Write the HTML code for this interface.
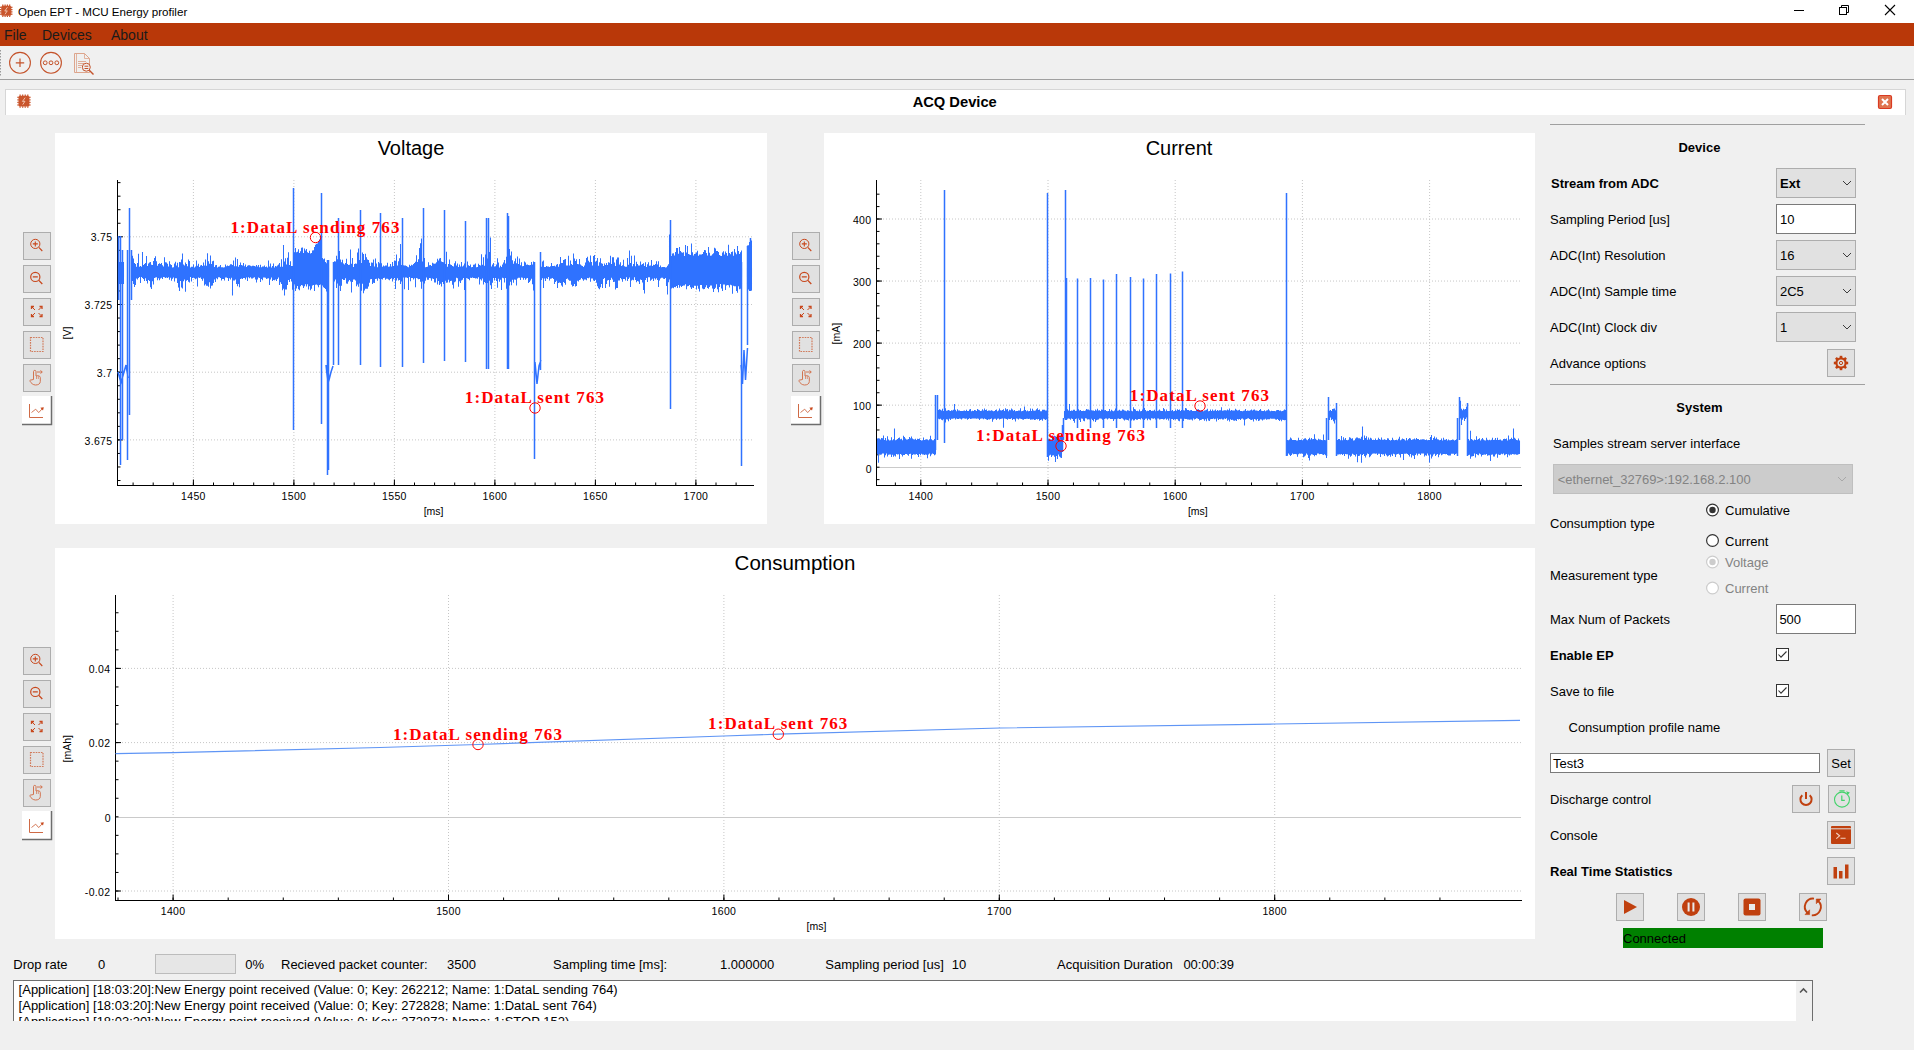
<!DOCTYPE html>
<html><head><meta charset="utf-8"><title>Open EPT - MCU Energy profiler</title>
<style>
html,body{margin:0;padding:0;background:#f0f0f0;width:1914px;height:1050px;overflow:hidden;}
svg{position:absolute;left:0;top:0;display:block;font-family:"Liberation Sans",sans-serif;}
</style></head><body>
<svg width="1914" height="1050" viewBox="0 0 1914 1050"><rect x="0" y="0" width="1914" height="23" fill="#ffffff"/><rect x="1.2" y="5.7" width="10.1" height="10.1" rx="1.5" fill="#c9552c"/><rect x="2.20" y="4.5" width="1.2" height="1.5" fill="#c9552c"/><rect x="2.20" y="15.5" width="1.2" height="1.5" fill="#c9552c"/><rect x="0" y="6.70" width="1.5" height="1.2" fill="#c9552c"/><rect x="11.0" y="6.70" width="1.5" height="1.2" fill="#c9552c"/><rect x="4.50" y="4.5" width="1.2" height="1.5" fill="#c9552c"/><rect x="4.50" y="15.5" width="1.2" height="1.5" fill="#c9552c"/><rect x="0" y="9.00" width="1.5" height="1.2" fill="#c9552c"/><rect x="11.0" y="9.00" width="1.5" height="1.2" fill="#c9552c"/><rect x="6.80" y="4.5" width="1.2" height="1.5" fill="#c9552c"/><rect x="6.80" y="15.5" width="1.2" height="1.5" fill="#c9552c"/><rect x="0" y="11.30" width="1.5" height="1.2" fill="#c9552c"/><rect x="11.0" y="11.30" width="1.5" height="1.2" fill="#c9552c"/><rect x="9.10" y="4.5" width="1.2" height="1.5" fill="#c9552c"/><rect x="9.10" y="15.5" width="1.2" height="1.5" fill="#c9552c"/><rect x="0" y="13.60" width="1.5" height="1.2" fill="#c9552c"/><rect x="11.0" y="13.60" width="1.5" height="1.2" fill="#c9552c"/><path d="M7.45 7.25 L4.75 11.05 L7.25 10.85 L5.05 14.25" stroke="#f3c9b5" stroke-width="0.9" fill="none"/><text x="18" y="16" font-size="11.6" fill="#000">Open EPT - MCU Energy profiler</text><line x1="1794" y1="10.5" x2="1804" y2="10.5" stroke="#000" stroke-width="1"/><rect x="1839.5" y="7.5" width="7" height="7" fill="none" stroke="#000" stroke-width="1"/><path d="M1841.5 7.5 V5.5 H1848.5 V12.5 H1846.5" fill="none" stroke="#000" stroke-width="1"/><path d="M1885 5 L1895 15 M1895 5 L1885 15" stroke="#000" stroke-width="1.1"/><rect x="0" y="23" width="1914" height="23" fill="#b93809"/><text x="4" y="40" font-size="14" fill="#1b1b1b">File</text><text x="42" y="40" font-size="14" fill="#1b1b1b">Devices</text><text x="111" y="40" font-size="14" fill="#1b1b1b">About</text><rect x="0" y="46" width="1914" height="33" fill="#f0f0f0"/><rect x="0" y="50" width="1" height="1.5" fill="#9a9a9a"/><rect x="0" y="53" width="1" height="1.5" fill="#9a9a9a"/><rect x="0" y="56" width="1" height="1.5" fill="#9a9a9a"/><rect x="0" y="59" width="1" height="1.5" fill="#9a9a9a"/><rect x="0" y="62" width="1" height="1.5" fill="#9a9a9a"/><rect x="0" y="65" width="1" height="1.5" fill="#9a9a9a"/><rect x="0" y="68" width="1" height="1.5" fill="#9a9a9a"/><rect x="0" y="71" width="1" height="1.5" fill="#9a9a9a"/><rect x="0" y="74" width="1" height="1.5" fill="#9a9a9a"/><circle cx="20" cy="62.8" r="10.4" fill="none" stroke="#c4522a" stroke-width="1.1"/><path d="M20 58.5 V67 M15.8 62.8 H24.2" stroke="#c4522a" stroke-width="1.2"/><circle cx="51" cy="62.8" r="10.4" fill="none" stroke="#c4522a" stroke-width="1.1"/><circle cx="45.2" cy="62.8" r="1.9" fill="none" stroke="#c4522a" stroke-width="1"/><circle cx="51" cy="62.8" r="1.9" fill="none" stroke="#c4522a" stroke-width="1"/><circle cx="56.8" cy="62.8" r="1.9" fill="none" stroke="#c4522a" stroke-width="1"/><path d="M74.5 53.5 H84.5 L89.5 58.5 V72.5 H74.5 Z" fill="none" stroke="#dda58c" stroke-width="1"/><path d="M76.5 54 V72 M84.5 53.5 V58.5 H89.5" fill="none" stroke="#dda58c" stroke-width="0.8"/><path d="M78 61.5 H86 M78 63.5 H84 M78 65.5 H82 M78 67.5 H81" stroke="#dda58c" stroke-width="0.9"/><circle cx="86.3" cy="67.2" r="4" fill="#f0f0f0" stroke="#c4522a" stroke-width="1"/><path d="M84.5 66.2 H88.3 M84.5 68.5 H88.3" stroke="#c4522a" stroke-width="1"/><path d="M89.3 70.3 L93.5 74.5" stroke="#c4522a" stroke-width="1.4"/><line x1="0" y1="79.5" x2="1914" y2="79.5" stroke="#a0a0a0" stroke-width="1"/><rect x="5" y="89" width="1901" height="26" fill="#ffffff"/><line x1="5" y1="89.5" x2="1906" y2="89.5" stroke="#d6d6d6" stroke-width="1"/><line x1="5.5" y1="89" x2="5.5" y2="115" stroke="#d6d6d6" stroke-width="1"/><line x1="1905.5" y1="89" x2="1905.5" y2="115" stroke="#d6d6d6" stroke-width="1"/><rect x="18.5" y="95.7" width="10.9" height="10.9" rx="1.5" fill="#c9552c"/><rect x="19.50" y="94.5" width="1.2" height="1.5" fill="#c9552c"/><rect x="19.50" y="106.3" width="1.2" height="1.5" fill="#c9552c"/><rect x="17.3" y="96.70" width="1.5" height="1.2" fill="#c9552c"/><rect x="29.1" y="96.70" width="1.5" height="1.2" fill="#c9552c"/><rect x="22.07" y="94.5" width="1.2" height="1.5" fill="#c9552c"/><rect x="22.07" y="106.3" width="1.2" height="1.5" fill="#c9552c"/><rect x="17.3" y="99.27" width="1.5" height="1.2" fill="#c9552c"/><rect x="29.1" y="99.27" width="1.5" height="1.2" fill="#c9552c"/><rect x="24.63" y="94.5" width="1.2" height="1.5" fill="#c9552c"/><rect x="24.63" y="106.3" width="1.2" height="1.5" fill="#c9552c"/><rect x="17.3" y="101.83" width="1.5" height="1.2" fill="#c9552c"/><rect x="29.1" y="101.83" width="1.5" height="1.2" fill="#c9552c"/><rect x="27.20" y="94.5" width="1.2" height="1.5" fill="#c9552c"/><rect x="27.20" y="106.3" width="1.2" height="1.5" fill="#c9552c"/><rect x="17.3" y="104.40" width="1.5" height="1.2" fill="#c9552c"/><rect x="29.1" y="104.40" width="1.5" height="1.2" fill="#c9552c"/><path d="M25.150000000000002 97.65 L22.450000000000003 101.45 L24.950000000000003 101.25 L22.750000000000004 104.65" stroke="#f3c9b5" stroke-width="0.9" fill="none"/><text x="954.7" y="107" font-size="14.7" font-weight="bold" text-anchor="middle" fill="#000">ACQ Device</text><rect x="1878.5" y="95.5" width="13" height="13" rx="1.5" fill="#e07550" stroke="#d93a22" stroke-width="1.2"/><path d="M1882 99 L1888 105 M1888 99 L1882 105" stroke="#fff" stroke-width="2"/><rect x="55" y="133" width="712" height="391" fill="#fff"/><text x="411" y="155" font-size="20" text-anchor="middle" fill="#000">Voltage</text><line x1="118" y1="236.8" x2="753" y2="236.8" stroke="#c6c6c6" stroke-width="1" stroke-dasharray="1 2"/><line x1="118" y1="304.5" x2="753" y2="304.5" stroke="#c6c6c6" stroke-width="1" stroke-dasharray="1 2"/><line x1="118" y1="372.2" x2="753" y2="372.2" stroke="#c6c6c6" stroke-width="1" stroke-dasharray="1 2"/><line x1="118" y1="439.9" x2="753" y2="439.9" stroke="#c6c6c6" stroke-width="1" stroke-dasharray="1 2"/><line x1="193.4" y1="180" x2="193.4" y2="485" stroke="#c6c6c6" stroke-width="1" stroke-dasharray="1 2"/><line x1="293.9" y1="180" x2="293.9" y2="485" stroke="#c6c6c6" stroke-width="1" stroke-dasharray="1 2"/><line x1="394.4" y1="180" x2="394.4" y2="485" stroke="#c6c6c6" stroke-width="1" stroke-dasharray="1 2"/><line x1="494.9" y1="180" x2="494.9" y2="485" stroke="#c6c6c6" stroke-width="1" stroke-dasharray="1 2"/><line x1="595.4" y1="180" x2="595.4" y2="485" stroke="#c6c6c6" stroke-width="1" stroke-dasharray="1 2"/><line x1="695.9" y1="180" x2="695.9" y2="485" stroke="#c6c6c6" stroke-width="1" stroke-dasharray="1 2"/><rect x="117" y="180" width="1" height="306" fill="#000"/><rect x="117" y="485" width="637" height="1" fill="#000"/><line x1="118" y1="480.52" x2="120.5" y2="480.52" stroke="#000" stroke-width="1"/><line x1="118" y1="466.98" x2="120.5" y2="466.98" stroke="#000" stroke-width="1"/><line x1="118" y1="453.44" x2="120.5" y2="453.44" stroke="#000" stroke-width="1"/><line x1="118" y1="439.9" x2="120.5" y2="439.9" stroke="#000" stroke-width="1"/><line x1="118" y1="426.36" x2="120.5" y2="426.36" stroke="#000" stroke-width="1"/><line x1="118" y1="412.82" x2="120.5" y2="412.82" stroke="#000" stroke-width="1"/><line x1="118" y1="399.28" x2="120.5" y2="399.28" stroke="#000" stroke-width="1"/><line x1="118" y1="385.74" x2="120.5" y2="385.74" stroke="#000" stroke-width="1"/><line x1="118" y1="372.2" x2="120.5" y2="372.2" stroke="#000" stroke-width="1"/><line x1="118" y1="358.66" x2="120.5" y2="358.66" stroke="#000" stroke-width="1"/><line x1="118" y1="345.12" x2="120.5" y2="345.12" stroke="#000" stroke-width="1"/><line x1="118" y1="331.58" x2="120.5" y2="331.58" stroke="#000" stroke-width="1"/><line x1="118" y1="318.04" x2="120.5" y2="318.04" stroke="#000" stroke-width="1"/><line x1="118" y1="304.5" x2="120.5" y2="304.5" stroke="#000" stroke-width="1"/><line x1="118" y1="290.96" x2="120.5" y2="290.96" stroke="#000" stroke-width="1"/><line x1="118" y1="277.42" x2="120.5" y2="277.42" stroke="#000" stroke-width="1"/><line x1="118" y1="263.88" x2="120.5" y2="263.88" stroke="#000" stroke-width="1"/><line x1="118" y1="250.34" x2="120.5" y2="250.34" stroke="#000" stroke-width="1"/><line x1="118" y1="236.8" x2="120.5" y2="236.8" stroke="#000" stroke-width="1"/><line x1="118" y1="223.26" x2="120.5" y2="223.26" stroke="#000" stroke-width="1"/><line x1="118" y1="209.72" x2="120.5" y2="209.72" stroke="#000" stroke-width="1"/><line x1="118" y1="196.18" x2="120.5" y2="196.18" stroke="#000" stroke-width="1"/><line x1="118" y1="182.64" x2="120.5" y2="182.64" stroke="#000" stroke-width="1"/><line x1="118" y1="236.8" x2="123" y2="236.8" stroke="#000" stroke-width="1"/><text x="112.5" y="241.4" font-size="10.5" text-anchor="end" fill="#000" letter-spacing="0.35">3.75</text><line x1="118" y1="304.5" x2="123" y2="304.5" stroke="#000" stroke-width="1"/><text x="112.5" y="309.1" font-size="10.5" text-anchor="end" fill="#000" letter-spacing="0.35">3.725</text><line x1="118" y1="372.2" x2="123" y2="372.2" stroke="#000" stroke-width="1"/><text x="112.5" y="376.8" font-size="10.5" text-anchor="end" fill="#000" letter-spacing="0.35">3.7</text><line x1="118" y1="439.9" x2="123" y2="439.9" stroke="#000" stroke-width="1"/><text x="112.5" y="444.5" font-size="10.5" text-anchor="end" fill="#000" letter-spacing="0.35">3.675</text><line x1="133.1" y1="485" x2="133.1" y2="482.5" stroke="#000" stroke-width="1"/><line x1="153.2" y1="485" x2="153.2" y2="482.5" stroke="#000" stroke-width="1"/><line x1="173.3" y1="485" x2="173.3" y2="482.5" stroke="#000" stroke-width="1"/><line x1="193.4" y1="485" x2="193.4" y2="482.5" stroke="#000" stroke-width="1"/><line x1="213.5" y1="485" x2="213.5" y2="482.5" stroke="#000" stroke-width="1"/><line x1="233.6" y1="485" x2="233.6" y2="482.5" stroke="#000" stroke-width="1"/><line x1="253.7" y1="485" x2="253.7" y2="482.5" stroke="#000" stroke-width="1"/><line x1="273.8" y1="485" x2="273.8" y2="482.5" stroke="#000" stroke-width="1"/><line x1="293.9" y1="485" x2="293.9" y2="482.5" stroke="#000" stroke-width="1"/><line x1="314.0" y1="485" x2="314.0" y2="482.5" stroke="#000" stroke-width="1"/><line x1="334.1" y1="485" x2="334.1" y2="482.5" stroke="#000" stroke-width="1"/><line x1="354.2" y1="485" x2="354.2" y2="482.5" stroke="#000" stroke-width="1"/><line x1="374.3" y1="485" x2="374.3" y2="482.5" stroke="#000" stroke-width="1"/><line x1="394.4" y1="485" x2="394.4" y2="482.5" stroke="#000" stroke-width="1"/><line x1="414.5" y1="485" x2="414.5" y2="482.5" stroke="#000" stroke-width="1"/><line x1="434.6" y1="485" x2="434.6" y2="482.5" stroke="#000" stroke-width="1"/><line x1="454.7" y1="485" x2="454.7" y2="482.5" stroke="#000" stroke-width="1"/><line x1="474.8" y1="485" x2="474.8" y2="482.5" stroke="#000" stroke-width="1"/><line x1="494.9" y1="485" x2="494.9" y2="482.5" stroke="#000" stroke-width="1"/><line x1="515.0" y1="485" x2="515.0" y2="482.5" stroke="#000" stroke-width="1"/><line x1="535.1" y1="485" x2="535.1" y2="482.5" stroke="#000" stroke-width="1"/><line x1="555.2" y1="485" x2="555.2" y2="482.5" stroke="#000" stroke-width="1"/><line x1="575.3" y1="485" x2="575.3" y2="482.5" stroke="#000" stroke-width="1"/><line x1="595.4" y1="485" x2="595.4" y2="482.5" stroke="#000" stroke-width="1"/><line x1="615.5" y1="485" x2="615.5" y2="482.5" stroke="#000" stroke-width="1"/><line x1="635.6" y1="485" x2="635.6" y2="482.5" stroke="#000" stroke-width="1"/><line x1="655.7" y1="485" x2="655.7" y2="482.5" stroke="#000" stroke-width="1"/><line x1="675.8" y1="485" x2="675.8" y2="482.5" stroke="#000" stroke-width="1"/><line x1="695.9" y1="485" x2="695.9" y2="482.5" stroke="#000" stroke-width="1"/><line x1="716.0" y1="485" x2="716.0" y2="482.5" stroke="#000" stroke-width="1"/><line x1="736.1" y1="485" x2="736.1" y2="482.5" stroke="#000" stroke-width="1"/><line x1="193.4" y1="485" x2="193.4" y2="479.5" stroke="#000" stroke-width="1"/><text x="193.4" y="500" font-size="10.5" text-anchor="middle" fill="#000" letter-spacing="0.3">1450</text><line x1="293.9" y1="485" x2="293.9" y2="479.5" stroke="#000" stroke-width="1"/><text x="293.9" y="500" font-size="10.5" text-anchor="middle" fill="#000" letter-spacing="0.3">1500</text><line x1="394.4" y1="485" x2="394.4" y2="479.5" stroke="#000" stroke-width="1"/><text x="394.4" y="500" font-size="10.5" text-anchor="middle" fill="#000" letter-spacing="0.3">1550</text><line x1="494.9" y1="485" x2="494.9" y2="479.5" stroke="#000" stroke-width="1"/><text x="494.9" y="500" font-size="10.5" text-anchor="middle" fill="#000" letter-spacing="0.3">1600</text><line x1="595.4" y1="485" x2="595.4" y2="479.5" stroke="#000" stroke-width="1"/><text x="595.4" y="500" font-size="10.5" text-anchor="middle" fill="#000" letter-spacing="0.3">1650</text><line x1="695.9" y1="485" x2="695.9" y2="479.5" stroke="#000" stroke-width="1"/><text x="695.9" y="500" font-size="10.5" text-anchor="middle" fill="#000" letter-spacing="0.3">1700</text><text x="433.6" y="515" font-size="10.5" text-anchor="middle" fill="#000">[ms]</text><text transform="translate(71 333) rotate(-90)" font-size="10.5" text-anchor="middle" fill="#000">[V]</text><path d="M131.5 264.2V279.2M132.5 255.7V280.9M133.5 258.4V283.9M134.5 263.1V286.9M135.5 263.9V285.1M136.5 266.8V278.4M137.5 263.1V279.5M138.5 253.8V278.0M139.5 266.8V277.1M140.5 265.9V282.9M141.5 266.7V277.1M142.5 252.0V278.0M143.5 265.1V278.9M144.5 264.1V281.1M145.5 262.9V278.2M146.5 255.9V280.9M147.5 266.0V283.5M148.5 263.6V279.9M149.5 262.5V281.1M150.5 262.0V287.2M151.5 264.8V289.0M152.5 265.0V281.2M153.5 260.9V284.5M154.5 258.1V277.9M155.5 256.3V277.4M156.5 261.2V277.3M157.5 265.8V280.2M158.5 264.1V278.2M159.5 263.3V280.2M160.5 263.9V278.5M161.5 263.0V277.7M162.5 265.3V279.1M163.5 266.6V277.1M164.5 257.2V277.2M165.5 262.2V277.9M166.5 262.6V277.6M167.5 263.7V278.1M168.5 266.6V277.3M169.5 261.3V279.7M170.5 264.3V277.7M171.5 264.9V280.8M172.5 267.4V278.7M173.5 267.2V277.5M174.5 263.6V281.6M175.5 261.8V278.2M176.5 265.6V278.2M177.5 262.8V282.9M178.5 267.3V287.4M179.5 262.0V291.0M180.5 262.3V281.0M181.5 259.5V287.6M182.5 253.5V288.6M183.5 264.4V281.2M184.5 265.5V279.6M185.5 262.6V291.8M186.5 263.9V280.7M187.5 266.2V280.0M188.5 259.5V281.8M189.5 260.9V282.4M190.5 267.5V277.1M191.5 266.7V281.6M192.5 266.8V278.0M193.5 264.4V277.8M194.5 267.4V278.3M195.5 266.4V279.3M196.5 260.5V278.6M197.5 265.7V286.4M198.5 263.8V277.5M199.5 266.9V277.9M200.5 265.6V277.4M201.5 265.0V278.9M202.5 266.0V280.8M203.5 262.6V278.5M204.5 265.4V285.5M205.5 259.5V284.2M206.5 265.7V285.7M207.5 253.3V285.8M208.5 261.3V286.8M209.5 263.7V282.2M210.5 255.4V288.6M211.5 263.9V285.8M212.5 261.3V285.6M213.5 260.8V282.9M214.5 267.0V279.5M215.5 265.2V282.1M216.5 264.9V278.2M217.5 267.5V279.3M218.5 266.8V277.2M219.5 266.5V277.2M220.5 265.1V278.1M221.5 267.2V280.6M222.5 267.2V279.1M223.5 267.5V279.0M224.5 267.2V280.5M225.5 264.4V277.5M226.5 266.3V277.6M227.5 265.5V278.1M228.5 266.0V281.1M229.5 265.5V278.3M230.5 264.3V279.6M231.5 264.3V277.8M232.5 264.9V295.6M233.5 260.5V280.5M234.5 266.3V280.5M235.5 257.4V279.5M236.5 266.2V284.0M237.5 259.1V286.2M238.5 266.8V283.9M239.5 264.9V287.3M240.5 262.5V278.9M241.5 264.9V278.5M242.5 265.6V279.1M243.5 263.1V277.9M244.5 266.3V278.1M245.5 264.6V279.5M246.5 266.9V277.4M247.5 265.8V281.0M248.5 265.3V277.2M249.5 265.3V278.3M250.5 265.8V277.2M251.5 266.3V278.6M252.5 265.7V278.6M253.5 265.8V277.8M254.5 266.0V277.2M255.5 266.6V279.4M256.5 264.9V282.6M257.5 266.6V279.6M258.5 265.1V277.5M259.5 267.2V277.9M260.5 264.7V282.0M261.5 267.3V279.1M262.5 266.5V280.3M263.5 266.5V277.4M264.5 265.6V277.5M265.5 267.1V277.8M266.5 266.6V279.0M267.5 267.4V278.5M268.5 260.6V278.2M269.5 266.4V284.9M270.5 263.5V279.4M271.5 267.5V277.6M272.5 265.9V280.9M273.5 263.4V280.1M274.5 267.5V280.3M275.5 265.9V279.4M276.5 266.6V280.9M277.5 265.5V279.0M278.5 264.4V277.5M279.5 263.1V285.0M280.5 266.7V282.2M281.5 259.2V284.1M282.5 266.7V290.2M283.5 245.0V288.8M284.5 261.5V295.4M285.5 258.2V289.5M286.5 264.4V289.6M287.5 257.8V284.9M288.5 252.3V280.0M289.5 264.9V282.0M290.5 261.3V278.9M291.5 266.1V281.6M292.5 265.9V289.7M293.5 252.3V292.2M294.5 252.2V284.6M295.5 248.0V291.1M296.5 252.3V288.6M297.5 251.7V286.0M298.5 249.2V289.3M299.5 252.9V290.2M300.5 251.3V286.2M301.5 247.7V285.0M302.5 247.6V285.6M303.5 253.0V288.0M304.5 248.6V286.3M305.5 250.5V284.2M306.5 249.0V286.4M307.5 252.3V284.2M308.5 252.9V289.6M309.5 250.8V286.2M310.5 253.6V290.2M311.5 253.0V288.8M312.5 250.5V285.5M313.5 250.3V285.1M314.5 246.9V291.0M315.5 244.8V284.8M316.5 243.7V284.4M317.5 243.4V285.3M318.5 241.4V287.3M319.5 239.5V285.1M320.5 236.7V284.5M321.5 256.2V284.9M322.5 258.0V285.5M323.5 259.3V287.3M324.5 258.4V287.9M325.5 261.9V289.0M326.5 263.3V291.6M327.5 265.7V286.2M328.5 263.3V285.0M334.5 261.2V281.6M335.5 261.6V279.4M336.5 255.7V288.0M337.5 259.2V283.4M338.5 250.7V281.8M339.5 251.0V285.8M340.5 259.5V290.9M341.5 262.3V285.7M342.5 259.8V279.0M343.5 263.4V279.9M344.5 264.6V280.1M345.5 263.1V278.3M346.5 258.8V283.5M347.5 263.9V283.8M348.5 264.9V281.4M349.5 264.8V280.1M350.5 249.6V281.4M351.5 263.8V292.4M352.5 258.0V282.0M353.5 266.9V279.5M354.5 264.0V279.6M355.5 263.4V280.6M356.5 263.7V286.2M357.5 252.6V284.4M358.5 248.5V286.7M359.5 260.1V283.4M360.5 266.0V281.5M361.5 262.9V290.8M362.5 252.5V283.7M363.5 253.9V293.2M364.5 259.9V290.5M365.5 253.8V288.7M366.5 257.3V288.8M367.5 259.6V288.7M368.5 260.1V286.6M369.5 262.7V282.7M370.5 265.9V279.2M371.5 262.5V278.9M372.5 262.7V283.9M373.5 259.4V282.7M374.5 266.4V283.0M375.5 258.5V279.1M376.5 263.4V278.7M377.5 267.3V280.8M378.5 261.9V278.2M379.5 263.3V278.9M380.5 254.2V278.7M381.5 263.3V278.9M382.5 266.7V279.5M383.5 265.4V278.0M384.5 266.3V277.7M385.5 265.5V279.7M386.5 265.6V278.8M387.5 262.8V278.7M388.5 266.7V279.6M389.5 266.4V280.3M390.5 263.9V279.0M391.5 266.5V278.3M392.5 262.1V281.6M393.5 265.9V279.3M394.5 260.4V278.1M395.5 260.7V289.1M396.5 254.4V280.5M397.5 265.4V278.3M398.5 261.2V280.6M399.5 258.3V279.9M400.5 244.1V283.9M401.5 265.0V281.4M402.5 263.5V278.2M403.5 265.2V277.5M404.5 265.6V289.3M405.5 265.4V277.4M406.5 266.0V277.6M407.5 266.8V278.1M408.5 267.3V290.0M409.5 264.8V277.1M410.5 266.0V281.2M411.5 264.7V278.1M412.5 265.2V277.9M413.5 264.0V279.4M414.5 263.0V278.2M415.5 261.8V287.3M416.5 255.3V278.0M417.5 262.0V278.5M418.5 259.3V279.3M419.5 248.1V279.1M420.5 243.3V281.8M421.5 238.4V288.8M422.5 261.5V281.5M423.5 264.4V278.8M424.5 257.9V283.6M425.5 267.2V280.7M426.5 267.1V277.4M427.5 266.7V279.8M428.5 262.2V279.7M429.5 265.3V278.1M430.5 265.0V278.2M431.5 265.9V280.7M432.5 262.7V278.5M433.5 263.6V279.1M434.5 263.8V282.6M435.5 263.4V282.5M436.5 262.3V278.2M437.5 258.8V284.6M438.5 260.5V281.1M439.5 258.6V285.1M440.5 258.0V283.7M441.5 261.5V286.6M442.5 262.1V281.9M443.5 262.3V284.0M444.5 264.2V283.2M445.5 264.0V280.7M446.5 251.7V282.8M447.5 266.7V282.5M448.5 264.1V279.7M449.5 259.4V282.4M450.5 264.5V281.1M451.5 265.1V280.7M452.5 266.0V284.7M453.5 266.5V288.5M454.5 263.3V282.3M455.5 261.2V281.5M456.5 265.6V277.7M457.5 263.6V278.3M458.5 267.1V286.7M459.5 264.4V281.3M460.5 266.6V283.1M461.5 262.1V280.4M462.5 266.4V279.8M463.5 265.4V278.1M464.5 263.5V290.0M465.5 264.0V280.4M466.5 267.5V277.9M467.5 261.5V278.5M468.5 265.2V279.0M469.5 266.0V280.2M470.5 264.5V277.8M471.5 267.2V278.0M472.5 266.9V277.6M473.5 264.7V278.1M474.5 264.5V278.1M475.5 263.6V278.5M476.5 267.3V278.2M477.5 266.9V278.7M478.5 263.8V277.2M479.5 265.1V284.4M480.5 265.6V279.2M481.5 254.2V280.4M482.5 264.7V278.5M483.5 257.3V284.6M484.5 265.7V282.0M485.5 254.5V282.9M486.5 246.4V301.4M487.5 258.4V283.0M488.5 242.8V304.3M489.5 252.0V280.7M490.5 237.6V285.3M491.5 266.6V289.0M492.5 264.6V282.7M493.5 262.9V277.9M494.5 266.4V280.6M495.5 266.3V277.9M496.5 264.5V281.1M497.5 258.2V287.8M498.5 262.4V278.7M499.5 267.5V281.7M500.5 265.7V279.7M501.5 267.0V290.0M502.5 264.6V277.7M503.5 262.5V278.3M504.5 260.1V282.5M505.5 263.4V278.0M506.5 256.8V288.8M507.5 255.3V281.9M508.5 237.3V287.1M509.5 249.0V285.5M510.5 255.4V281.8M511.5 251.5V285.3M512.5 260.2V279.8M513.5 263.8V282.8M514.5 261.2V279.4M515.5 258.5V279.8M516.5 263.2V285.6M517.5 256.5V278.5M518.5 264.1V277.8M519.5 258.6V277.8M520.5 265.3V280.0M521.5 262.2V277.4M522.5 266.2V277.8M523.5 266.1V279.8M524.5 261.5V278.1M525.5 262.4V279.7M526.5 264.8V278.4M527.5 264.5V278.1M528.5 265.0V283.1M529.5 265.3V281.9M530.5 265.1V280.4M531.5 262.1V278.7M532.5 264.4V284.2M533.5 261.6V290.4M534.5 267.2V282.8M540.5 263.4V279.4M541.5 266.8V280.1M542.5 261.5V278.3M543.5 260.4V288.1M544.5 266.9V278.6M545.5 266.9V281.0M546.5 265.9V278.3M547.5 266.5V279.1M548.5 266.5V277.1M549.5 267.1V280.4M550.5 266.2V278.7M551.5 263.0V278.6M552.5 266.0V278.1M553.5 266.0V279.0M554.5 265.8V284.1M555.5 266.6V282.0M556.5 264.8V280.7M557.5 264.1V287.9M558.5 266.8V283.0M559.5 264.3V282.4M560.5 257.0V282.9M561.5 262.9V285.4M562.5 263.0V286.7M563.5 260.0V281.9M564.5 259.6V283.0M565.5 259.0V284.7M566.5 265.5V279.1M567.5 265.4V278.6M568.5 255.7V279.8M569.5 265.5V280.7M570.5 260.6V280.7M571.5 264.1V284.8M572.5 265.0V286.6M573.5 253.4V285.9M574.5 258.4V284.0M575.5 261.0V286.5M576.5 259.3V285.9M577.5 264.1V280.7M578.5 264.3V281.5M579.5 258.9V280.1M580.5 264.5V279.4M581.5 265.5V278.0M582.5 266.1V279.3M583.5 267.0V280.7M584.5 265.6V279.4M585.5 262.4V279.5M586.5 258.1V280.2M587.5 256.7V278.0M588.5 260.7V278.3M589.5 262.2V277.6M590.5 255.6V281.8M591.5 261.9V278.6M592.5 265.5V278.4M593.5 256.0V280.4M594.5 254.9V281.1M595.5 261.9V279.8M596.5 260.8V282.8M597.5 258.0V286.3M598.5 265.8V288.2M599.5 262.3V289.3M600.5 258.3V287.3M601.5 263.3V284.1M602.5 263.7V288.1M603.5 266.0V279.0M604.5 263.5V277.9M605.5 265.0V288.1M606.5 262.9V283.9M607.5 265.0V280.6M608.5 262.2V280.0M609.5 262.7V286.8M610.5 255.8V280.0M611.5 263.9V277.8M612.5 257.3V279.4M613.5 257.3V282.0M614.5 262.5V281.8M615.5 265.9V289.6M616.5 259.5V287.9M617.5 257.4V287.9M618.5 257.5V280.4M619.5 264.6V280.6M620.5 262.2V277.9M621.5 265.9V279.2M622.5 265.3V281.8M623.5 259.8V279.0M624.5 266.3V279.1M625.5 266.7V280.5M626.5 266.7V277.3M627.5 258.1V280.9M628.5 264.7V278.9M629.5 250.6V277.5M630.5 263.1V286.9M631.5 255.7V280.6M632.5 266.2V279.8M633.5 263.9V280.2M634.5 255.5V277.3M635.5 266.2V279.9M636.5 261.8V282.2M637.5 263.9V280.9M638.5 265.5V281.5M639.5 265.4V283.9M640.5 261.5V279.5M641.5 264.7V279.9M642.5 264.1V282.6M643.5 263.3V289.9M644.5 265.9V293.5M645.5 262.3V279.9M646.5 267.0V278.1M647.5 264.2V282.0M648.5 262.2V277.2M649.5 265.8V277.3M650.5 265.6V280.7M651.5 260.1V279.8M652.5 266.0V278.7M653.5 264.7V281.1M654.5 265.1V278.3M655.5 264.1V279.4M656.5 261.2V278.2M657.5 264.4V279.9M658.5 261.2V287.0M659.5 267.1V280.6M660.5 265.4V278.6M661.5 267.3V277.7M662.5 267.0V277.8M663.5 267.0V278.8M664.5 266.9V279.1M665.5 267.4V278.1M666.5 267.2V286.1M667.5 265.8V294.6M668.5 264.2V282.2M669.5 234.6V279.5M670.5 249.6V292.5M671.5 256.0V288.6M672.5 253.5V287.8M673.5 253.3V288.3M674.5 255.6V287.1M675.5 251.9V287.3M676.5 247.9V286.1M677.5 247.9V288.1M678.5 253.7V284.9M679.5 247.1V287.8M680.5 250.9V285.7M681.5 252.3V287.0M682.5 252.8V285.9M683.5 252.2V285.5M684.5 255.9V285.6M685.5 245.1V284.3M686.5 252.4V289.2M687.5 246.0V286.3M688.5 254.0V285.9M689.5 254.5V284.9M690.5 254.9V287.2M691.5 243.4V289.1M692.5 252.3V287.5M693.5 255.6V288.0M694.5 253.9V285.7M695.5 253.5V285.8M696.5 252.6V289.4M697.5 250.8V285.7M698.5 255.7V288.8M699.5 254.6V291.4M700.5 254.6V284.9M701.5 254.4V285.1M702.5 253.9V288.5M703.5 251.9V289.3M704.5 250.1V289.1M705.5 250.3V287.3M706.5 253.0V285.3M707.5 255.5V288.1M708.5 247.1V288.7M709.5 252.8V286.9M710.5 255.8V285.6M711.5 255.5V285.4M712.5 254.3V288.6M713.5 253.2V292.1M714.5 247.8V288.9M715.5 248.6V287.8M716.5 251.1V284.3M717.5 251.0V289.2M718.5 252.0V292.2M719.5 254.9V287.1M720.5 255.7V284.0M721.5 255.9V288.6M722.5 252.6V291.0M723.5 251.2V284.6M724.5 254.5V284.5M725.5 251.5V289.9M726.5 253.1V285.5M727.5 255.8V284.9M728.5 244.7V285.3M729.5 253.0V287.6M730.5 254.3V284.7M731.5 252.0V285.2M732.5 251.4V293.8M733.5 255.8V285.8M734.5 249.1V286.2M735.5 252.5V286.3M736.5 254.2V290.9M737.5 245.9V292.8M738.5 251.1V286.3M739.5 254.0V289.2M740.5 252.2V288.7M741.5 250.6V286.7M747.5 245.6V288.8M748.5 245.3V289.5M749.5 241.9V290.9M750.5 242.4V290.1M751.5 240.4V290.5M118.5 262.0V284.0M119.5 262.0V284.0M120.5 262.0V284.0M121.5 262.0V284.0M122.5 262.0V284.0M123.5 262.0V284.0" stroke="#2f72ff" stroke-width="1.05" fill="none"/><path d="M118.5 236V300M120.5 236V465M122.5 250V440M127.5 250V460M129.5 208V415M131.5 250V300M118 372 L121 383 L124 372 L126 365 L128 378M293.5 188V430M321.5 193V424M327.5 260V475M328.5 260V470M333.5 262V365M326 365 L328 384 L331 372 L333 366M338.5 218V365M360.5 210V365M380.5 213V367M402.5 218V367M423.5 208V363M444.5 210V361M465.5 221V362M486.5 218V369M488.5 218V369M507.5 213V369M508.5 216V369M534.5 262V459M540.5 252V370M535 362 L537 384 L539 366 L541 360M670.5 220V409M741.5 262V466M747.5 246V345M750.5 238V291M741 365 L742.5 384 L744 350 L745.5 380 L747.5 348" stroke="#2f72ff" stroke-width="1.5" fill="none"/><circle cx="315.5" cy="237.5" r="5.2" fill="none" stroke="#ff0000" stroke-width="1"/><text x="315.5" y="232.5" font-size="17" font-weight="bold" text-anchor="middle" font-family='"Liberation Serif", serif' fill="#ff0000" letter-spacing="1.1">1:DataL sending 763</text><circle cx="535" cy="408" r="5.2" fill="none" stroke="#ff0000" stroke-width="1"/><text x="535" y="403" font-size="17" font-weight="bold" text-anchor="middle" font-family='"Liberation Serif", serif' fill="#ff0000" letter-spacing="1.1">1:DataL sent 763</text><rect x="824" y="133" width="711" height="391" fill="#fff"/><text x="1179" y="155" font-size="20" text-anchor="middle" fill="#000">Current</text><line x1="877" y1="405.15" x2="1521" y2="405.15" stroke="#c6c6c6" stroke-width="1" stroke-dasharray="1 2"/><line x1="877" y1="343.1" x2="1521" y2="343.1" stroke="#c6c6c6" stroke-width="1" stroke-dasharray="1 2"/><line x1="877" y1="281.05" x2="1521" y2="281.05" stroke="#c6c6c6" stroke-width="1" stroke-dasharray="1 2"/><line x1="877" y1="219.0" x2="1521" y2="219.0" stroke="#c6c6c6" stroke-width="1" stroke-dasharray="1 2"/><line x1="920.8" y1="180" x2="920.8" y2="485" stroke="#c6c6c6" stroke-width="1" stroke-dasharray="1 2"/><line x1="1048.0" y1="180" x2="1048.0" y2="485" stroke="#c6c6c6" stroke-width="1" stroke-dasharray="1 2"/><line x1="1175.2" y1="180" x2="1175.2" y2="485" stroke="#c6c6c6" stroke-width="1" stroke-dasharray="1 2"/><line x1="1302.4" y1="180" x2="1302.4" y2="485" stroke="#c6c6c6" stroke-width="1" stroke-dasharray="1 2"/><line x1="1429.6" y1="180" x2="1429.6" y2="485" stroke="#c6c6c6" stroke-width="1" stroke-dasharray="1 2"/><line x1="877" y1="467.5" x2="1521" y2="467.5" stroke="#cacaca" stroke-width="1.2"/><rect x="876" y="180" width="1" height="306" fill="#000"/><rect x="876" y="485" width="646" height="1" fill="#000"/><line x1="877" y1="479.61" x2="879.5" y2="479.61" stroke="#000" stroke-width="1"/><line x1="877" y1="467.2" x2="879.5" y2="467.2" stroke="#000" stroke-width="1"/><line x1="877" y1="454.79" x2="879.5" y2="454.79" stroke="#000" stroke-width="1"/><line x1="877" y1="442.38" x2="879.5" y2="442.38" stroke="#000" stroke-width="1"/><line x1="877" y1="429.97" x2="879.5" y2="429.97" stroke="#000" stroke-width="1"/><line x1="877" y1="417.56" x2="879.5" y2="417.56" stroke="#000" stroke-width="1"/><line x1="877" y1="405.15" x2="879.5" y2="405.15" stroke="#000" stroke-width="1"/><line x1="877" y1="392.74" x2="879.5" y2="392.74" stroke="#000" stroke-width="1"/><line x1="877" y1="380.33" x2="879.5" y2="380.33" stroke="#000" stroke-width="1"/><line x1="877" y1="367.92" x2="879.5" y2="367.92" stroke="#000" stroke-width="1"/><line x1="877" y1="355.51" x2="879.5" y2="355.51" stroke="#000" stroke-width="1"/><line x1="877" y1="343.1" x2="879.5" y2="343.1" stroke="#000" stroke-width="1"/><line x1="877" y1="330.69" x2="879.5" y2="330.69" stroke="#000" stroke-width="1"/><line x1="877" y1="318.28" x2="879.5" y2="318.28" stroke="#000" stroke-width="1"/><line x1="877" y1="305.87" x2="879.5" y2="305.87" stroke="#000" stroke-width="1"/><line x1="877" y1="293.46" x2="879.5" y2="293.46" stroke="#000" stroke-width="1"/><line x1="877" y1="281.05" x2="879.5" y2="281.05" stroke="#000" stroke-width="1"/><line x1="877" y1="268.64" x2="879.5" y2="268.64" stroke="#000" stroke-width="1"/><line x1="877" y1="256.23" x2="879.5" y2="256.23" stroke="#000" stroke-width="1"/><line x1="877" y1="243.82" x2="879.5" y2="243.82" stroke="#000" stroke-width="1"/><line x1="877" y1="231.41" x2="879.5" y2="231.41" stroke="#000" stroke-width="1"/><line x1="877" y1="219.0" x2="879.5" y2="219.0" stroke="#000" stroke-width="1"/><line x1="877" y1="206.59" x2="879.5" y2="206.59" stroke="#000" stroke-width="1"/><line x1="877" y1="194.18" x2="879.5" y2="194.18" stroke="#000" stroke-width="1"/><line x1="877" y1="405.15" x2="882" y2="405.15" stroke="#000" stroke-width="1"/><text x="871.5" y="409.8" font-size="10.5" text-anchor="end" fill="#000" letter-spacing="0.35">100</text><line x1="877" y1="343.1" x2="882" y2="343.1" stroke="#000" stroke-width="1"/><text x="871.5" y="347.7" font-size="10.5" text-anchor="end" fill="#000" letter-spacing="0.35">200</text><line x1="877" y1="281.05" x2="882" y2="281.05" stroke="#000" stroke-width="1"/><text x="871.5" y="285.7" font-size="10.5" text-anchor="end" fill="#000" letter-spacing="0.35">300</text><line x1="877" y1="219.0" x2="882" y2="219.0" stroke="#000" stroke-width="1"/><text x="871.5" y="223.6" font-size="10.5" text-anchor="end" fill="#000" letter-spacing="0.35">400</text><line x1="895.36" y1="485" x2="895.36" y2="482.5" stroke="#000" stroke-width="1"/><line x1="920.8" y1="485" x2="920.8" y2="482.5" stroke="#000" stroke-width="1"/><line x1="946.24" y1="485" x2="946.24" y2="482.5" stroke="#000" stroke-width="1"/><line x1="971.68" y1="485" x2="971.68" y2="482.5" stroke="#000" stroke-width="1"/><line x1="997.12" y1="485" x2="997.12" y2="482.5" stroke="#000" stroke-width="1"/><line x1="1022.56" y1="485" x2="1022.56" y2="482.5" stroke="#000" stroke-width="1"/><line x1="1048.0" y1="485" x2="1048.0" y2="482.5" stroke="#000" stroke-width="1"/><line x1="1073.44" y1="485" x2="1073.44" y2="482.5" stroke="#000" stroke-width="1"/><line x1="1098.88" y1="485" x2="1098.88" y2="482.5" stroke="#000" stroke-width="1"/><line x1="1124.32" y1="485" x2="1124.32" y2="482.5" stroke="#000" stroke-width="1"/><line x1="1149.76" y1="485" x2="1149.76" y2="482.5" stroke="#000" stroke-width="1"/><line x1="1175.2" y1="485" x2="1175.2" y2="482.5" stroke="#000" stroke-width="1"/><line x1="1200.64" y1="485" x2="1200.64" y2="482.5" stroke="#000" stroke-width="1"/><line x1="1226.08" y1="485" x2="1226.08" y2="482.5" stroke="#000" stroke-width="1"/><line x1="1251.52" y1="485" x2="1251.52" y2="482.5" stroke="#000" stroke-width="1"/><line x1="1276.96" y1="485" x2="1276.96" y2="482.5" stroke="#000" stroke-width="1"/><line x1="1302.4" y1="485" x2="1302.4" y2="482.5" stroke="#000" stroke-width="1"/><line x1="1327.84" y1="485" x2="1327.84" y2="482.5" stroke="#000" stroke-width="1"/><line x1="1353.28" y1="485" x2="1353.28" y2="482.5" stroke="#000" stroke-width="1"/><line x1="1378.72" y1="485" x2="1378.72" y2="482.5" stroke="#000" stroke-width="1"/><line x1="1404.16" y1="485" x2="1404.16" y2="482.5" stroke="#000" stroke-width="1"/><line x1="1429.6" y1="485" x2="1429.6" y2="482.5" stroke="#000" stroke-width="1"/><line x1="1455.04" y1="485" x2="1455.04" y2="482.5" stroke="#000" stroke-width="1"/><line x1="1480.48" y1="485" x2="1480.48" y2="482.5" stroke="#000" stroke-width="1"/><line x1="1505.92" y1="485" x2="1505.92" y2="482.5" stroke="#000" stroke-width="1"/><line x1="920.8" y1="485" x2="920.8" y2="479.5" stroke="#000" stroke-width="1"/><text x="920.8" y="500" font-size="10.5" text-anchor="middle" fill="#000" letter-spacing="0.3">1400</text><line x1="1048.0" y1="485" x2="1048.0" y2="479.5" stroke="#000" stroke-width="1"/><text x="1048.0" y="500" font-size="10.5" text-anchor="middle" fill="#000" letter-spacing="0.3">1500</text><line x1="1175.2" y1="485" x2="1175.2" y2="479.5" stroke="#000" stroke-width="1"/><text x="1175.2" y="500" font-size="10.5" text-anchor="middle" fill="#000" letter-spacing="0.3">1600</text><line x1="1302.4" y1="485" x2="1302.4" y2="479.5" stroke="#000" stroke-width="1"/><text x="1302.4" y="500" font-size="10.5" text-anchor="middle" fill="#000" letter-spacing="0.3">1700</text><line x1="1429.6" y1="485" x2="1429.6" y2="479.5" stroke="#000" stroke-width="1"/><text x="1429.6" y="500" font-size="10.5" text-anchor="middle" fill="#000" letter-spacing="0.3">1800</text><text x="871.5" y="472.5" font-size="10.5" text-anchor="end" fill="#000">0</text><text x="1197.8" y="515" font-size="10.5" text-anchor="middle" fill="#000">[ms]</text><text transform="translate(839.5 333.7) rotate(-90)" font-size="10.5" text-anchor="middle" fill="#000">[mA]</text><path d="M877.5 438.5V454.3M878.5 438.3V462.7M879.5 438.4V454.0M880.5 439.5V454.8M881.5 437.9V454.5M882.5 438.3V453.5M883.5 435.5V453.6M884.5 440.1V457.5M885.5 438.1V455.2M886.5 440.5V453.5M887.5 436.2V456.4M888.5 439.4V454.7M889.5 440.5V454.4M890.5 440.2V454.4M891.5 437.3V457.1M892.5 440.2V454.8M893.5 439.3V456.8M894.5 428.5V455.5M895.5 440.3V456.6M896.5 439.8V453.9M897.5 439.0V454.6M898.5 438.0V454.2M899.5 437.4V459.0M900.5 439.3V454.0M901.5 438.7V454.8M902.5 440.3V456.6M903.5 435.8V455.1M904.5 437.0V454.9M905.5 438.6V454.1M906.5 439.5V453.9M907.5 439.4V454.7M908.5 439.1V455.7M909.5 437.0V453.9M910.5 438.3V453.8M911.5 436.5V458.7M912.5 438.6V454.9M913.5 439.3V454.2M914.5 439.5V454.6M915.5 438.7V454.4M916.5 440.0V453.9M917.5 438.8V455.1M918.5 439.1V457.0M919.5 438.5V453.9M920.5 439.9V455.2M921.5 440.5V453.7M922.5 440.2V454.4M923.5 437.5V454.6M924.5 440.0V455.0M925.5 439.4V454.5M926.5 439.3V454.8M927.5 439.6V458.3M928.5 440.3V454.5M929.5 439.2V453.6M930.5 435.7V456.2M931.5 439.3V454.4M932.5 440.2V453.6M933.5 440.2V453.9M934.5 438.9V455.2M935.5 440.1V454.5M937.5 409.2V419.6M938.5 409.9V418.7M939.5 409.3V419.2M940.5 409.7V418.7M941.5 410.6V419.8M942.5 408.7V420.2M943.5 411.0V419.3M944.5 411.0V418.7M945.5 408.2V422.6M946.5 410.8V419.3M947.5 410.4V419.5M948.5 410.1V421.2M949.5 410.5V418.8M950.5 411.1V420.1M951.5 410.3V418.7M952.5 410.6V418.8M953.5 409.8V418.5M954.5 404.1V418.3M955.5 409.8V419.4M956.5 411.2V418.6M957.5 409.2V418.9M958.5 410.6V419.0M959.5 410.6V418.4M960.5 410.9V418.8M961.5 411.1V419.5M962.5 411.0V418.6M963.5 410.7V418.3M964.5 410.6V418.6M965.5 411.0V418.8M966.5 409.7V418.6M967.5 411.1V419.7M968.5 411.0V419.0M969.5 409.5V418.3M970.5 408.9V419.0M971.5 411.2V418.7M972.5 410.7V418.4M973.5 410.9V418.4M974.5 409.9V418.5M975.5 410.2V418.6M976.5 410.9V418.8M977.5 409.1V418.4M978.5 409.8V418.7M979.5 410.3V420.0M980.5 411.0V418.8M981.5 410.8V418.6M982.5 409.3V418.5M983.5 410.4V419.3M984.5 408.6V418.4M985.5 409.9V419.1M986.5 409.6V419.5M987.5 411.1V420.0M988.5 410.5V419.3M989.5 410.4V419.4M990.5 410.8V419.1M991.5 410.2V418.5M992.5 410.7V421.8M993.5 411.2V419.6M994.5 410.9V418.7M995.5 409.9V418.8M996.5 409.5V420.0M997.5 411.3V418.7M998.5 410.5V418.4M999.5 408.5V419.4M1000.5 410.3V419.0M1001.5 410.4V418.7M1002.5 410.1V418.4M1003.5 409.3V427.7M1004.5 410.9V418.5M1005.5 408.2V418.7M1006.5 409.6V419.0M1007.5 409.1V419.7M1008.5 411.2V418.7M1009.5 409.7V418.9M1010.5 410.3V418.9M1011.5 408.5V418.3M1012.5 409.5V419.9M1013.5 410.7V419.0M1014.5 409.9V419.2M1015.5 411.3V421.5M1016.5 410.9V418.4M1017.5 410.9V418.8M1018.5 410.6V419.6M1019.5 410.5V418.4M1020.5 408.2V418.7M1021.5 411.2V419.1M1022.5 410.9V419.4M1023.5 410.6V419.7M1024.5 406.6V419.0M1025.5 410.0V418.9M1026.5 411.2V418.8M1027.5 410.4V418.8M1028.5 411.2V419.0M1029.5 410.9V418.8M1030.5 408.6V419.8M1031.5 410.9V419.4M1032.5 408.7V419.4M1033.5 410.5V419.2M1034.5 410.7V419.9M1035.5 410.4V419.7M1036.5 409.2V419.0M1037.5 408.3V419.6M1038.5 409.9V419.0M1039.5 409.4V420.8M1040.5 411.3V419.9M1041.5 411.2V419.6M1042.5 409.8V420.7M1043.5 409.7V418.7M1044.5 409.7V419.3M1045.5 410.6V420.1M1046.5 410.5V419.3M1047.5 439.5V454.6M1048.5 439.2V460.8M1049.5 439.0V455.4M1050.5 439.3V454.7M1051.5 439.5V456.9M1052.5 435.4V455.6M1053.5 436.2V455.3M1054.5 435.8V456.7M1055.5 436.2V461.9M1056.5 437.0V455.9M1057.5 436.3V459.0M1058.5 434.9V454.6M1059.5 435.2V456.5M1060.5 435.5V457.5M1061.5 434.0V457.9M1064.5 410.9V418.4M1065.5 411.2V418.5M1066.5 411.2V419.5M1067.5 409.3V418.8M1068.5 410.5V418.4M1069.5 403.9V418.7M1070.5 410.9V419.7M1071.5 410.4V418.5M1072.5 410.8V419.1M1073.5 409.8V421.0M1074.5 409.8V422.7M1075.5 411.1V419.1M1076.5 410.8V418.6M1077.5 405.2V419.3M1078.5 409.3V418.4M1079.5 410.4V420.1M1080.5 410.1V422.0M1081.5 411.1V418.5M1082.5 410.9V418.8M1083.5 410.7V420.8M1084.5 411.0V421.3M1085.5 410.5V418.3M1086.5 409.1V418.5M1087.5 409.4V419.5M1088.5 409.4V419.3M1089.5 410.3V419.5M1090.5 409.3V420.6M1091.5 410.3V418.7M1092.5 410.5V420.0M1093.5 410.6V421.2M1094.5 410.9V419.1M1095.5 409.6V422.0M1096.5 410.6V420.2M1097.5 408.8V419.7M1098.5 410.4V419.4M1099.5 410.2V418.4M1100.5 411.1V418.6M1101.5 409.5V418.8M1102.5 409.8V419.7M1103.5 407.2V418.7M1104.5 410.2V419.0M1105.5 409.9V418.5M1106.5 411.1V418.6M1107.5 411.2V419.6M1108.5 411.0V418.5M1109.5 409.0V418.3M1110.5 411.3V419.0M1111.5 409.8V419.0M1112.5 410.8V418.9M1113.5 411.3V420.9M1114.5 410.6V419.3M1115.5 408.6V418.9M1116.5 410.7V418.8M1117.5 410.8V418.7M1118.5 410.4V418.4M1119.5 409.7V419.1M1120.5 410.7V419.1M1121.5 410.7V418.3M1122.5 409.4V418.5M1123.5 409.8V419.4M1124.5 410.6V420.6M1125.5 410.8V419.6M1126.5 411.2V419.7M1127.5 410.3V420.0M1128.5 410.6V420.5M1129.5 411.0V418.6M1130.5 408.5V418.5M1131.5 410.7V420.4M1132.5 411.3V419.3M1133.5 407.3V420.5M1134.5 409.1V420.2M1135.5 409.6V418.9M1136.5 411.0V419.8M1137.5 410.7V419.7M1138.5 411.2V419.0M1139.5 409.4V419.1M1140.5 411.2V419.6M1141.5 411.0V418.3M1142.5 409.4V419.2M1143.5 410.2V418.4M1144.5 408.1V419.9M1145.5 409.9V418.7M1146.5 411.2V418.5M1147.5 410.7V420.3M1148.5 411.0V418.8M1149.5 410.1V419.5M1150.5 410.1V420.3M1151.5 410.9V418.3M1152.5 410.7V418.5M1153.5 410.7V418.8M1154.5 409.7V418.3M1155.5 411.3V419.5M1156.5 410.4V418.7M1157.5 411.1V418.5M1158.5 410.4V418.6M1159.5 409.4V419.5M1160.5 410.7V419.2M1161.5 410.9V418.9M1162.5 411.1V419.0M1163.5 408.1V419.4M1164.5 409.2V419.3M1165.5 411.3V418.5M1166.5 409.4V419.8M1167.5 410.9V418.8M1168.5 411.1V420.6M1169.5 411.0V418.6M1170.5 410.3V419.6M1171.5 410.7V419.0M1172.5 410.1V418.9M1173.5 411.2V420.0M1174.5 411.0V419.2M1175.5 409.6V419.8M1176.5 410.8V419.0M1177.5 409.2V419.2M1178.5 409.9V420.8M1179.5 409.6V421.2M1180.5 410.9V418.7M1181.5 410.0V418.8M1182.5 411.1V419.1M1183.5 410.2V421.1M1184.5 410.5V418.7M1185.5 408.0V419.1M1186.5 408.4V418.9M1187.5 410.0V419.4M1188.5 409.9V419.5M1189.5 410.7V419.7M1190.5 410.2V419.6M1191.5 410.0V419.6M1192.5 410.9V420.6M1193.5 411.0V418.5M1194.5 410.9V419.4M1195.5 411.0V419.1M1196.5 409.8V418.3M1197.5 409.6V418.4M1198.5 409.2V419.1M1199.5 409.9V420.4M1200.5 410.7V420.1M1201.5 410.3V419.8M1202.5 410.6V419.1M1203.5 411.2V419.3M1204.5 410.5V420.8M1205.5 410.2V419.3M1206.5 409.8V421.3M1207.5 408.8V418.4M1208.5 411.3V420.5M1209.5 411.1V421.0M1210.5 409.4V419.3M1211.5 411.1V419.0M1212.5 409.6V419.1M1213.5 410.7V418.4M1214.5 410.5V419.2M1215.5 409.6V418.8M1216.5 410.9V421.6M1217.5 410.1V418.5M1218.5 410.7V419.9M1219.5 410.3V419.1M1220.5 410.2V419.2M1221.5 407.3V418.8M1222.5 410.8V419.5M1223.5 410.4V419.4M1224.5 410.3V418.5M1225.5 410.3V418.9M1226.5 410.5V418.3M1227.5 409.4V420.8M1228.5 410.3V419.7M1229.5 408.6V421.4M1230.5 410.8V419.3M1231.5 409.9V420.0M1232.5 410.4V419.8M1233.5 410.4V420.5M1234.5 410.5V420.7M1235.5 408.7V420.2M1236.5 409.7V421.1M1237.5 410.4V419.1M1238.5 410.2V419.6M1239.5 409.8V418.9M1240.5 410.9V420.1M1241.5 411.1V418.8M1242.5 411.2V418.4M1243.5 410.7V419.5M1244.5 410.6V425.5M1245.5 408.9V419.4M1246.5 411.1V418.9M1247.5 410.4V418.6M1248.5 410.7V418.3M1249.5 410.8V418.9M1250.5 410.2V419.7M1251.5 409.4V419.9M1252.5 410.6V419.5M1253.5 409.8V421.4M1254.5 409.5V418.9M1255.5 410.4V419.6M1256.5 410.4V420.5M1257.5 410.8V418.9M1258.5 411.0V421.0M1259.5 410.1V420.4M1260.5 408.9V419.3M1261.5 410.8V419.5M1262.5 411.0V420.4M1263.5 411.0V419.4M1264.5 410.3V419.6M1265.5 411.2V418.8M1266.5 410.4V419.8M1267.5 410.2V419.2M1268.5 409.3V419.3M1269.5 410.4V419.2M1270.5 411.2V418.4M1271.5 410.8V418.8M1272.5 411.1V418.7M1273.5 411.0V418.7M1274.5 410.9V418.8M1275.5 411.2V419.4M1276.5 410.3V419.7M1277.5 410.1V419.1M1278.5 410.1V420.0M1279.5 410.7V421.0M1280.5 410.6V419.7M1281.5 411.2V421.3M1282.5 411.0V419.7M1283.5 410.6V420.1M1284.5 409.5V420.3M1285.5 410.1V420.1M1287.5 440.1V455.8M1288.5 440.2V453.6M1289.5 439.4V454.8M1290.5 437.4V455.9M1291.5 438.4V455.1M1292.5 440.0V453.5M1293.5 440.0V454.3M1294.5 440.0V454.0M1295.5 439.9V453.9M1296.5 440.5V454.3M1297.5 440.4V456.8M1298.5 437.8V454.2M1299.5 440.0V453.6M1300.5 440.0V453.7M1301.5 439.6V453.6M1302.5 440.2V453.7M1303.5 439.2V457.2M1304.5 438.4V456.5M1305.5 438.2V455.4M1306.5 439.6V453.6M1307.5 440.3V454.7M1308.5 439.0V458.0M1309.5 437.8V460.4M1310.5 439.4V455.5M1311.5 438.1V454.3M1312.5 439.2V454.5M1313.5 439.1V455.0M1314.5 434.3V456.2M1315.5 438.8V455.1M1316.5 439.8V455.2M1317.5 440.3V453.5M1318.5 438.7V453.6M1319.5 439.5V454.2M1320.5 439.6V454.0M1321.5 440.1V453.9M1322.5 440.2V454.5M1323.5 434.6V455.0M1324.5 440.1V454.3M1325.5 440.3V455.1M1326.5 438.2V458.1M1329.5 410.7V420.1M1330.5 410.0V417.6M1331.5 411.0V419.9M1332.5 409.1V419.3M1333.5 408.8V421.3M1334.5 408.4V423.6M1335.5 410.3V419.8M1336.5 406.9V423.5M1337.5 439.9V454.6M1338.5 439.1V454.6M1339.5 439.1V454.3M1340.5 440.2V454.5M1341.5 436.1V454.0M1342.5 440.2V455.0M1343.5 437.2V454.0M1344.5 439.4V456.1M1345.5 438.1V454.0M1346.5 440.0V454.3M1347.5 440.2V454.2M1348.5 439.8V458.8M1349.5 437.3V455.3M1350.5 437.7V456.7M1351.5 438.8V455.7M1352.5 438.3V453.8M1353.5 440.5V454.4M1354.5 440.2V454.9M1355.5 438.5V456.6M1356.5 437.5V454.3M1357.5 437.6V462.2M1358.5 438.3V456.1M1359.5 438.3V455.8M1360.5 438.8V454.2M1361.5 436.8V462.8M1362.5 426.4V455.0M1363.5 440.0V454.1M1364.5 435.5V455.9M1365.5 438.1V457.6M1366.5 436.2V455.2M1367.5 439.8V453.6M1368.5 437.6V453.9M1369.5 439.4V457.2M1370.5 437.7V456.3M1371.5 438.5V454.8M1372.5 439.9V453.8M1373.5 439.8V453.6M1374.5 440.1V453.6M1375.5 438.5V453.7M1376.5 439.9V453.5M1377.5 439.7V454.9M1378.5 437.8V453.8M1379.5 439.1V453.7M1380.5 439.8V456.9M1381.5 437.6V453.9M1382.5 439.8V454.6M1383.5 439.7V454.3M1384.5 439.2V455.9M1385.5 439.8V453.7M1386.5 440.1V455.2M1387.5 438.2V456.4M1388.5 438.6V455.7M1389.5 440.1V455.0M1390.5 440.4V456.8M1391.5 440.1V454.4M1392.5 437.7V456.1M1393.5 439.8V453.8M1394.5 440.2V454.2M1395.5 440.0V456.9M1396.5 439.7V454.6M1397.5 440.3V454.1M1398.5 438.8V453.8M1399.5 436.7V454.8M1400.5 440.3V457.5M1401.5 439.4V454.0M1402.5 438.5V454.0M1403.5 439.1V460.1M1404.5 439.6V453.8M1405.5 440.4V453.8M1406.5 437.9V453.5M1407.5 440.3V454.0M1408.5 439.1V455.0M1409.5 438.1V456.5M1410.5 438.5V454.0M1411.5 440.1V457.6M1412.5 439.4V455.2M1413.5 439.3V455.8M1414.5 438.5V459.0M1415.5 439.5V455.0M1416.5 438.0V453.6M1417.5 438.9V455.4M1418.5 438.9V453.7M1419.5 440.1V453.7M1420.5 439.6V455.1M1421.5 439.4V453.5M1422.5 439.3V453.6M1423.5 439.2V453.5M1424.5 439.5V456.5M1425.5 439.9V455.3M1426.5 439.4V455.7M1427.5 440.2V453.6M1428.5 440.0V455.5M1429.5 440.1V462.5M1430.5 436.9V454.5M1431.5 435.1V458.4M1432.5 440.1V456.6M1433.5 438.1V454.4M1434.5 436.5V453.8M1435.5 438.8V456.0M1436.5 437.6V454.7M1437.5 439.2V454.0M1438.5 439.5V457.2M1439.5 440.3V454.8M1440.5 440.1V453.5M1441.5 438.4V455.3M1442.5 440.4V454.6M1443.5 437.7V454.0M1444.5 439.8V454.0M1445.5 439.7V454.3M1446.5 439.0V454.0M1447.5 440.5V454.9M1448.5 439.5V455.4M1449.5 440.2V455.4M1450.5 440.3V455.4M1451.5 439.9V453.8M1452.5 439.5V453.8M1453.5 439.8V453.8M1454.5 440.4V455.0M1455.5 440.1V453.9M1456.5 439.2V453.5M1457.5 437.4V455.9M1460.5 400.7V418.6M1461.5 408.7V425.1M1462.5 410.3V419.8M1463.5 408.8V417.7M1464.5 409.6V421.1M1465.5 409.0V418.9M1466.5 406.8V417.6M1467.5 410.9V419.0M1468.5 439.0V454.9M1469.5 440.4V454.8M1470.5 430.7V458.7M1471.5 439.1V456.4M1472.5 439.8V456.3M1473.5 440.5V456.1M1474.5 439.6V453.6M1475.5 439.9V457.6M1476.5 436.3V453.9M1477.5 439.8V454.7M1478.5 439.1V455.3M1479.5 438.3V453.6M1480.5 440.5V454.2M1481.5 439.3V456.5M1482.5 438.1V455.1M1483.5 439.6V454.7M1484.5 440.3V454.5M1485.5 440.4V454.7M1486.5 437.7V454.0M1487.5 439.8V455.8M1488.5 440.2V455.2M1489.5 439.8V455.3M1490.5 440.3V460.9M1491.5 439.7V454.8M1492.5 437.8V454.6M1493.5 439.9V456.4M1494.5 439.8V456.6M1495.5 437.9V454.6M1496.5 440.1V453.8M1497.5 437.8V457.7M1498.5 439.9V454.6M1499.5 439.7V455.1M1500.5 439.6V454.7M1501.5 440.5V453.8M1502.5 440.4V454.3M1503.5 439.1V453.6M1504.5 438.7V455.2M1505.5 439.1V454.4M1506.5 438.5V453.9M1507.5 440.4V457.2M1508.5 435.4V454.4M1509.5 439.6V455.6M1510.5 439.1V454.6M1511.5 437.7V454.8M1512.5 439.0V453.9M1513.5 428.4V454.2M1514.5 437.8V454.6M1515.5 438.7V454.3M1516.5 439.9V454.7M1517.5 440.2V454.8M1518.5 438.6V454.3M1519.5 440.4V454.0" stroke="#2f72ff" stroke-width="1.05" fill="none"/><path d="M935.5 395V450M937.5 395V440M944.5 190V443M1047.5 193V457M1062.5 425V452M1063.5 418V440M1065.5 190V420M1066.5 278V420M1077.5 278.5V428M1090.5 278V428M1103.5 279.5V428M1116.5 274V428M1130.5 277V428M1143.5 278.5V428M1156.5 274V428M1170.5 273.5V428M1182.5 271.5V428M1286.5 193V456M1326.5 418V456M1328.5 397V440M1336.5 403V456M1457.5 418V456M1459.5 397V440M1467.5 403V456" stroke="#2f72ff" stroke-width="1.5" fill="none"/><circle cx="1061" cy="446" r="5.2" fill="none" stroke="#ff0000" stroke-width="1"/><text x="1061" y="441" font-size="17" font-weight="bold" text-anchor="middle" font-family='"Liberation Serif", serif' fill="#ff0000" letter-spacing="1.1">1:DataL sending 763</text><circle cx="1200" cy="406" r="5.2" fill="none" stroke="#ff0000" stroke-width="1"/><text x="1200" y="401" font-size="17" font-weight="bold" text-anchor="middle" font-family='"Liberation Serif", serif' fill="#ff0000" letter-spacing="1.1">1:DataL sent 763</text><rect x="55" y="548" width="1480" height="391" fill="#fff"/><text x="795" y="570" font-size="20.5" text-anchor="middle" fill="#000">Consumption</text><line x1="116" y1="668.4" x2="1521" y2="668.4" stroke="#c6c6c6" stroke-width="1" stroke-dasharray="1 2"/><line x1="116" y1="742.6" x2="1521" y2="742.6" stroke="#c6c6c6" stroke-width="1" stroke-dasharray="1 2"/><line x1="116" y1="891.0" x2="1521" y2="891.0" stroke="#c6c6c6" stroke-width="1" stroke-dasharray="1 2"/><line x1="173.1" y1="595" x2="173.1" y2="900" stroke="#c6c6c6" stroke-width="1" stroke-dasharray="1 2"/><line x1="448.5" y1="595" x2="448.5" y2="900" stroke="#c6c6c6" stroke-width="1" stroke-dasharray="1 2"/><line x1="723.9" y1="595" x2="723.9" y2="900" stroke="#c6c6c6" stroke-width="1" stroke-dasharray="1 2"/><line x1="999.3" y1="595" x2="999.3" y2="900" stroke="#c6c6c6" stroke-width="1" stroke-dasharray="1 2"/><line x1="1274.7" y1="595" x2="1274.7" y2="900" stroke="#c6c6c6" stroke-width="1" stroke-dasharray="1 2"/><line x1="116" y1="817.5" x2="1521" y2="817.5" stroke="#cacaca" stroke-width="1.2"/><rect x="115" y="595" width="1" height="306" fill="#000"/><rect x="115" y="900" width="1407" height="1" fill="#000"/><line x1="116" y1="891.0" x2="118.5" y2="891.0" stroke="#000" stroke-width="1"/><line x1="116" y1="872.45" x2="118.5" y2="872.45" stroke="#000" stroke-width="1"/><line x1="116" y1="853.9" x2="118.5" y2="853.9" stroke="#000" stroke-width="1"/><line x1="116" y1="835.35" x2="118.5" y2="835.35" stroke="#000" stroke-width="1"/><line x1="116" y1="816.8" x2="118.5" y2="816.8" stroke="#000" stroke-width="1"/><line x1="116" y1="798.25" x2="118.5" y2="798.25" stroke="#000" stroke-width="1"/><line x1="116" y1="779.7" x2="118.5" y2="779.7" stroke="#000" stroke-width="1"/><line x1="116" y1="761.15" x2="118.5" y2="761.15" stroke="#000" stroke-width="1"/><line x1="116" y1="742.6" x2="118.5" y2="742.6" stroke="#000" stroke-width="1"/><line x1="116" y1="724.05" x2="118.5" y2="724.05" stroke="#000" stroke-width="1"/><line x1="116" y1="705.5" x2="118.5" y2="705.5" stroke="#000" stroke-width="1"/><line x1="116" y1="686.95" x2="118.5" y2="686.95" stroke="#000" stroke-width="1"/><line x1="116" y1="668.4" x2="118.5" y2="668.4" stroke="#000" stroke-width="1"/><line x1="116" y1="649.85" x2="118.5" y2="649.85" stroke="#000" stroke-width="1"/><line x1="116" y1="631.3" x2="118.5" y2="631.3" stroke="#000" stroke-width="1"/><line x1="116" y1="612.75" x2="118.5" y2="612.75" stroke="#000" stroke-width="1"/><line x1="116" y1="668.4" x2="121" y2="668.4" stroke="#000" stroke-width="1"/><text x="110.5" y="673.0" font-size="10.5" text-anchor="end" fill="#000" letter-spacing="0.35">0.04</text><line x1="116" y1="742.6" x2="121" y2="742.6" stroke="#000" stroke-width="1"/><text x="110.5" y="747.2" font-size="10.5" text-anchor="end" fill="#000" letter-spacing="0.35">0.02</text><line x1="116" y1="891.0" x2="121" y2="891.0" stroke="#000" stroke-width="1"/><text x="110.5" y="895.6" font-size="10.5" text-anchor="end" fill="#000" letter-spacing="0.35">-0.02</text><line x1="118.02" y1="900" x2="118.02" y2="897.5" stroke="#000" stroke-width="1"/><line x1="173.1" y1="900" x2="173.1" y2="897.5" stroke="#000" stroke-width="1"/><line x1="228.18" y1="900" x2="228.18" y2="897.5" stroke="#000" stroke-width="1"/><line x1="283.26" y1="900" x2="283.26" y2="897.5" stroke="#000" stroke-width="1"/><line x1="338.34" y1="900" x2="338.34" y2="897.5" stroke="#000" stroke-width="1"/><line x1="393.42" y1="900" x2="393.42" y2="897.5" stroke="#000" stroke-width="1"/><line x1="448.5" y1="900" x2="448.5" y2="897.5" stroke="#000" stroke-width="1"/><line x1="503.58" y1="900" x2="503.58" y2="897.5" stroke="#000" stroke-width="1"/><line x1="558.66" y1="900" x2="558.66" y2="897.5" stroke="#000" stroke-width="1"/><line x1="613.74" y1="900" x2="613.74" y2="897.5" stroke="#000" stroke-width="1"/><line x1="668.82" y1="900" x2="668.82" y2="897.5" stroke="#000" stroke-width="1"/><line x1="723.9" y1="900" x2="723.9" y2="897.5" stroke="#000" stroke-width="1"/><line x1="778.98" y1="900" x2="778.98" y2="897.5" stroke="#000" stroke-width="1"/><line x1="834.06" y1="900" x2="834.06" y2="897.5" stroke="#000" stroke-width="1"/><line x1="889.14" y1="900" x2="889.14" y2="897.5" stroke="#000" stroke-width="1"/><line x1="944.22" y1="900" x2="944.22" y2="897.5" stroke="#000" stroke-width="1"/><line x1="999.3" y1="900" x2="999.3" y2="897.5" stroke="#000" stroke-width="1"/><line x1="1054.38" y1="900" x2="1054.38" y2="897.5" stroke="#000" stroke-width="1"/><line x1="1109.46" y1="900" x2="1109.46" y2="897.5" stroke="#000" stroke-width="1"/><line x1="1164.54" y1="900" x2="1164.54" y2="897.5" stroke="#000" stroke-width="1"/><line x1="1219.62" y1="900" x2="1219.62" y2="897.5" stroke="#000" stroke-width="1"/><line x1="1274.7" y1="900" x2="1274.7" y2="897.5" stroke="#000" stroke-width="1"/><line x1="1329.78" y1="900" x2="1329.78" y2="897.5" stroke="#000" stroke-width="1"/><line x1="1384.86" y1="900" x2="1384.86" y2="897.5" stroke="#000" stroke-width="1"/><line x1="1439.94" y1="900" x2="1439.94" y2="897.5" stroke="#000" stroke-width="1"/><line x1="173.1" y1="900" x2="173.1" y2="894.5" stroke="#000" stroke-width="1"/><text x="173.1" y="915" font-size="10.5" text-anchor="middle" fill="#000" letter-spacing="0.3">1400</text><line x1="448.5" y1="900" x2="448.5" y2="894.5" stroke="#000" stroke-width="1"/><text x="448.5" y="915" font-size="10.5" text-anchor="middle" fill="#000" letter-spacing="0.3">1500</text><line x1="723.9" y1="900" x2="723.9" y2="894.5" stroke="#000" stroke-width="1"/><text x="723.9" y="915" font-size="10.5" text-anchor="middle" fill="#000" letter-spacing="0.3">1600</text><line x1="999.3" y1="900" x2="999.3" y2="894.5" stroke="#000" stroke-width="1"/><text x="999.3" y="915" font-size="10.5" text-anchor="middle" fill="#000" letter-spacing="0.3">1700</text><line x1="1274.7" y1="900" x2="1274.7" y2="894.5" stroke="#000" stroke-width="1"/><text x="1274.7" y="915" font-size="10.5" text-anchor="middle" fill="#000" letter-spacing="0.3">1800</text><text x="110.5" y="822" font-size="10.5" text-anchor="end" fill="#000">0</text><text x="816.4" y="930" font-size="10.5" text-anchor="middle" fill="#000">[ms]</text><text transform="translate(71 748.8) rotate(-90)" font-size="10.5" text-anchor="middle" fill="#000">[mAh]</text><path d="M115.5 753.7 L173 752.7 L380 747.5 L478 744.5 L724 736 L778 734.2 L1000 728 L1275 724 L1520 720.3" stroke="#5f95f5" stroke-width="1.2" fill="none"/><circle cx="478" cy="744.5" r="5.2" fill="none" stroke="#ff0000" stroke-width="1"/><text x="478" y="739.5" font-size="17" font-weight="bold" text-anchor="middle" font-family='"Liberation Serif", serif' fill="#ff0000" letter-spacing="1.1">1:DataL sending 763</text><circle cx="778.3" cy="734.2" r="5.2" fill="none" stroke="#ff0000" stroke-width="1"/><text x="778.3" y="729.2" font-size="17" font-weight="bold" text-anchor="middle" font-family='"Liberation Serif", serif' fill="#ff0000" letter-spacing="1.1">1:DataL sent 763</text><rect x="23.5" y="232.5" width="27" height="27" fill="#e1e1e1" stroke="#adadad" stroke-width="1"/><rect x="23.5" y="265.5" width="27" height="27" fill="#e1e1e1" stroke="#adadad" stroke-width="1"/><rect x="23.5" y="298.5" width="27" height="27" fill="#e1e1e1" stroke="#adadad" stroke-width="1"/><rect x="23.5" y="331.5" width="27" height="27" fill="#e1e1e1" stroke="#adadad" stroke-width="1"/><rect x="23.5" y="364.5" width="27" height="27" fill="#e1e1e1" stroke="#adadad" stroke-width="1"/><circle cx="35.3" cy="243.9" r="4.6" fill="none" stroke="#c8471c" stroke-width="1"/><path d="M35.3 241.4V246.4M32.8 243.9H37.8M38.8 247.4L42.3 251" stroke="#c8471c" stroke-width="1.1"/><circle cx="35.3" cy="276.9" r="4.6" fill="none" stroke="#c8471c" stroke-width="1.2"/><path d="M32.8 276.9H37.8M38.8 280.4L42.3 284" stroke="#c8471c" stroke-width="1.3"/><path d="M31.5 309V306.5H34 M39.5 306.5H42V309 M31.5 314V316.5H34 M39.5 316.5H42V314" fill="none" stroke="#c8471c" stroke-width="1.3"/><path d="M32 307L35 310 M41.5 307L38.5 310 M32 316L35 313 M41.5 316L38.5 313" stroke="#c8471c" stroke-width="1"/><rect x="30.5" y="337.5" width="12.5" height="14" fill="none" stroke="#d07a5a" stroke-width="1.2" stroke-dasharray="1.6 1"/><path d="M33.5 379.5 V371.5 C33.5 370 36 370 36 371.5 V376 C37.5 375.3 40 375.5 40.3 377.5 V381.5 C40.3 384 38 385 35.5 385 C33 385 31 383 30 381.2 C29.7 380.5 30.2 379.8 31 380 Z" fill="none" stroke="#d27450" stroke-width="1"/><path d="M36.5 376 V379 M38.3 376 V379" stroke="#d27450" stroke-width="0.7"/><path d="M37 372 H42 M40.5 370.5 L42.3 372 L40.5 373.5" fill="none" stroke="#d27450" stroke-width="1"/><rect x="22" y="396" width="30" height="29" fill="#fff"/><path d="M22 424.5H51.5V396" fill="none" stroke="#6d6d6d" stroke-width="1.5"/><path d="M29.5 404V417.5H43" fill="none" stroke="#cf6a45" stroke-width="1"/><path d="M31.5 412.5 L35.7 409.2 L38.7 412.6 L42.2 408.8" fill="none" stroke="#cf6a45" stroke-width="0.9"/><path d="M40.3 407.8 L43.8 407.2 L43 410.6 Z" fill="#c8471c"/><g transform="translate(769 0)"><rect x="23.5" y="232.5" width="27" height="27" fill="#e1e1e1" stroke="#adadad" stroke-width="1"/><rect x="23.5" y="265.5" width="27" height="27" fill="#e1e1e1" stroke="#adadad" stroke-width="1"/><rect x="23.5" y="298.5" width="27" height="27" fill="#e1e1e1" stroke="#adadad" stroke-width="1"/><rect x="23.5" y="331.5" width="27" height="27" fill="#e1e1e1" stroke="#adadad" stroke-width="1"/><rect x="23.5" y="364.5" width="27" height="27" fill="#e1e1e1" stroke="#adadad" stroke-width="1"/><circle cx="35.3" cy="243.9" r="4.6" fill="none" stroke="#c8471c" stroke-width="1"/><path d="M35.3 241.4V246.4M32.8 243.9H37.8M38.8 247.4L42.3 251" stroke="#c8471c" stroke-width="1.1"/><circle cx="35.3" cy="276.9" r="4.6" fill="none" stroke="#c8471c" stroke-width="1.2"/><path d="M32.8 276.9H37.8M38.8 280.4L42.3 284" stroke="#c8471c" stroke-width="1.3"/><path d="M31.5 309V306.5H34 M39.5 306.5H42V309 M31.5 314V316.5H34 M39.5 316.5H42V314" fill="none" stroke="#c8471c" stroke-width="1.3"/><path d="M32 307L35 310 M41.5 307L38.5 310 M32 316L35 313 M41.5 316L38.5 313" stroke="#c8471c" stroke-width="1"/><rect x="30.5" y="337.5" width="12.5" height="14" fill="none" stroke="#d07a5a" stroke-width="1.2" stroke-dasharray="1.6 1"/><path d="M33.5 379.5 V371.5 C33.5 370 36 370 36 371.5 V376 C37.5 375.3 40 375.5 40.3 377.5 V381.5 C40.3 384 38 385 35.5 385 C33 385 31 383 30 381.2 C29.7 380.5 30.2 379.8 31 380 Z" fill="none" stroke="#d27450" stroke-width="1"/><path d="M36.5 376 V379 M38.3 376 V379" stroke="#d27450" stroke-width="0.7"/><path d="M37 372 H42 M40.5 370.5 L42.3 372 L40.5 373.5" fill="none" stroke="#d27450" stroke-width="1"/><rect x="22" y="396" width="30" height="29" fill="#fff"/><path d="M22 424.5H51.5V396" fill="none" stroke="#6d6d6d" stroke-width="1.5"/><path d="M29.5 404V417.5H43" fill="none" stroke="#cf6a45" stroke-width="1"/><path d="M31.5 412.5 L35.7 409.2 L38.7 412.6 L42.2 408.8" fill="none" stroke="#cf6a45" stroke-width="0.9"/><path d="M40.3 407.8 L43.8 407.2 L43 410.6 Z" fill="#c8471c"/></g><g transform="translate(0 415)"><rect x="23.5" y="232.5" width="27" height="27" fill="#e1e1e1" stroke="#adadad" stroke-width="1"/><rect x="23.5" y="265.5" width="27" height="27" fill="#e1e1e1" stroke="#adadad" stroke-width="1"/><rect x="23.5" y="298.5" width="27" height="27" fill="#e1e1e1" stroke="#adadad" stroke-width="1"/><rect x="23.5" y="331.5" width="27" height="27" fill="#e1e1e1" stroke="#adadad" stroke-width="1"/><rect x="23.5" y="364.5" width="27" height="27" fill="#e1e1e1" stroke="#adadad" stroke-width="1"/><circle cx="35.3" cy="243.9" r="4.6" fill="none" stroke="#c8471c" stroke-width="1"/><path d="M35.3 241.4V246.4M32.8 243.9H37.8M38.8 247.4L42.3 251" stroke="#c8471c" stroke-width="1.1"/><circle cx="35.3" cy="276.9" r="4.6" fill="none" stroke="#c8471c" stroke-width="1.2"/><path d="M32.8 276.9H37.8M38.8 280.4L42.3 284" stroke="#c8471c" stroke-width="1.3"/><path d="M31.5 309V306.5H34 M39.5 306.5H42V309 M31.5 314V316.5H34 M39.5 316.5H42V314" fill="none" stroke="#c8471c" stroke-width="1.3"/><path d="M32 307L35 310 M41.5 307L38.5 310 M32 316L35 313 M41.5 316L38.5 313" stroke="#c8471c" stroke-width="1"/><rect x="30.5" y="337.5" width="12.5" height="14" fill="none" stroke="#d07a5a" stroke-width="1.2" stroke-dasharray="1.6 1"/><path d="M33.5 379.5 V371.5 C33.5 370 36 370 36 371.5 V376 C37.5 375.3 40 375.5 40.3 377.5 V381.5 C40.3 384 38 385 35.5 385 C33 385 31 383 30 381.2 C29.7 380.5 30.2 379.8 31 380 Z" fill="none" stroke="#d27450" stroke-width="1"/><path d="M36.5 376 V379 M38.3 376 V379" stroke="#d27450" stroke-width="0.7"/><path d="M37 372 H42 M40.5 370.5 L42.3 372 L40.5 373.5" fill="none" stroke="#d27450" stroke-width="1"/><rect x="22" y="396" width="30" height="29" fill="#fff"/><path d="M22 424.5H51.5V396" fill="none" stroke="#6d6d6d" stroke-width="1.5"/><path d="M29.5 404V417.5H43" fill="none" stroke="#cf6a45" stroke-width="1"/><path d="M31.5 412.5 L35.7 409.2 L38.7 412.6 L42.2 408.8" fill="none" stroke="#cf6a45" stroke-width="0.9"/><path d="M40.3 407.8 L43.8 407.2 L43 410.6 Z" fill="#c8471c"/></g><line x1="1550" y1="124.5" x2="1865" y2="124.5" stroke="#a0a0a0" stroke-width="1"/><text x="1699.4" y="152" font-size="13" font-weight="bold" text-anchor="middle" fill="#000">Device</text><text x="1551" y="188" font-size="13" font-weight="bold" fill="#000">Stream from ADC</text><text x="1550" y="224" font-size="13" fill="#000">Sampling Period [us]</text><text x="1550" y="260" font-size="13" fill="#000">ADC(Int) Resolution</text><text x="1550" y="296" font-size="13" fill="#000">ADC(Int) Sample time</text><text x="1550" y="332" font-size="13" fill="#000">ADC(Int) Clock div</text><text x="1550" y="368" font-size="13" fill="#000">Advance options</text><rect x="1776.5" y="168.5" width="79" height="29" fill="#e1e1e1" stroke="#adadad"/><text x="1780" y="188" font-size="13" font-weight="bold" fill="#000">Ext</text><path d="M1843 181 L1847 185 L1851 181" fill="none" stroke="#3c3c3c" stroke-width="1"/><rect x="1776.5" y="204.5" width="79" height="29" fill="#fff" stroke="#7a7a7a"/><text x="1780" y="224" font-size="13" fill="#000">10</text><rect x="1776.5" y="240.5" width="79" height="29" fill="#e1e1e1" stroke="#adadad"/><text x="1780" y="260" font-size="13" fill="#000">16</text><path d="M1843 253 L1847 257 L1851 253" fill="none" stroke="#3c3c3c" stroke-width="1"/><rect x="1776.5" y="276.5" width="79" height="29" fill="#e1e1e1" stroke="#adadad"/><text x="1780" y="296" font-size="13" fill="#000">2C5</text><path d="M1843 289 L1847 293 L1851 289" fill="none" stroke="#3c3c3c" stroke-width="1"/><rect x="1776.5" y="312.5" width="79" height="29" fill="#e1e1e1" stroke="#adadad"/><text x="1780" y="332" font-size="13" fill="#000">1</text><path d="M1843 325 L1847 329 L1851 325" fill="none" stroke="#3c3c3c" stroke-width="1"/><rect x="1827.5" y="349.5" width="27" height="27" fill="#e1e1e1" stroke="#adadad"/><rect x="1839.7" y="355.8" width="2.6" height="3" fill="#c0400f" transform="rotate(0 1841 363)"/><rect x="1839.7" y="355.8" width="2.6" height="3" fill="#c0400f" transform="rotate(45 1841 363)"/><rect x="1839.7" y="355.8" width="2.6" height="3" fill="#c0400f" transform="rotate(90 1841 363)"/><rect x="1839.7" y="355.8" width="2.6" height="3" fill="#c0400f" transform="rotate(135 1841 363)"/><rect x="1839.7" y="355.8" width="2.6" height="3" fill="#c0400f" transform="rotate(180 1841 363)"/><rect x="1839.7" y="355.8" width="2.6" height="3" fill="#c0400f" transform="rotate(225 1841 363)"/><rect x="1839.7" y="355.8" width="2.6" height="3" fill="#c0400f" transform="rotate(270 1841 363)"/><rect x="1839.7" y="355.8" width="2.6" height="3" fill="#c0400f" transform="rotate(315 1841 363)"/><circle cx="1841" cy="363" r="4.6" fill="none" stroke="#c0400f" stroke-width="2.2"/><circle cx="1841" cy="363" r="1.6" fill="none" stroke="#c0400f" stroke-width="1"/><line x1="1550" y1="384.5" x2="1865" y2="384.5" stroke="#a0a0a0" stroke-width="1"/><text x="1699.4" y="412" font-size="13" font-weight="bold" text-anchor="middle" fill="#000">System</text><text x="1553" y="448" font-size="13" fill="#000">Samples stream server interface</text><rect x="1553.5" y="464.5" width="299" height="29" fill="#cccccc" stroke="#bfbfbf"/><text x="1557.7" y="484" font-size="13" fill="#838383">&lt;ethernet_32769&gt;:192.168.2.100</text><path d="M1838 477 L1842 481 L1846 477" fill="none" stroke="#a8a8a8" stroke-width="1"/><text x="1550" y="528" font-size="13" fill="#000">Consumption type</text><circle cx="1712.5" cy="510" r="5.9" fill="#fff" stroke="#333333" stroke-width="1.2"/><circle cx="1712.5" cy="510" r="3.2" fill="#333333"/><text x="1725" y="515" font-size="13" fill="#000">Cumulative</text><circle cx="1712.5" cy="540.5" r="5.9" fill="#fff" stroke="#333333" stroke-width="1.2"/><text x="1725" y="546" font-size="13" fill="#000">Current</text><circle cx="1712.5" cy="562" r="5.9" fill="#fff" stroke="#cccccc" stroke-width="1.2"/><circle cx="1712.5" cy="562" r="3.2" fill="#cccccc"/><text x="1725" y="567" font-size="13" fill="#838383">Voltage</text><circle cx="1712.5" cy="588" r="5.9" fill="#fff" stroke="#cccccc" stroke-width="1.2"/><text x="1725" y="593" font-size="13" fill="#838383">Current</text><text x="1550" y="580" font-size="13" fill="#000">Measurement type</text><text x="1550" y="624" font-size="13" fill="#000">Max Num of Packets</text><rect x="1776.5" y="604.5" width="79" height="29" fill="#fff" stroke="#7a7a7a"/><text x="1779.4" y="624" font-size="13" fill="#000">500</text><text x="1550" y="660" font-size="13" font-weight="bold" fill="#000">Enable EP</text><rect x="1776.5" y="648.5" width="12" height="12" fill="#fff" stroke="#333"/><path d="M1778.5 654.5 L1781 657.2 L1786.5 651.5" fill="none" stroke="#333" stroke-width="1.1"/><text x="1550" y="696" font-size="13" fill="#000">Save to file</text><rect x="1776.5" y="684.5" width="12" height="12" fill="#fff" stroke="#333"/><path d="M1778.5 690.5 L1781 693.2 L1786.5 687.5" fill="none" stroke="#333" stroke-width="1.1"/><text x="1568.5" y="732" font-size="13" fill="#000">Consumption profile name</text><rect x="1550.5" y="753.5" width="269" height="19" fill="#fff" stroke="#7a7a7a"/><text x="1553" y="767.5" font-size="13" fill="#000">Test3</text><rect x="1827.5" y="749.5" width="27" height="27" fill="#e1e1e1" stroke="#adadad"/><text x="1841" y="768" font-size="13" text-anchor="middle" fill="#000">Set</text><text x="1550" y="804" font-size="13" fill="#000">Discharge control</text><rect x="1792.5" y="785.5" width="27" height="27" fill="#e1e1e1" stroke="#adadad"/><rect x="1828.5" y="785.5" width="27" height="27" fill="#e1e1e1" stroke="#adadad"/><path d="M1802.3 795.2 A5.6 5.6 0 1 0 1809.7 795.2" fill="none" stroke="#c0400f" stroke-width="2"/><path d="M1806 792 V799" stroke="#c0400f" stroke-width="2"/><circle cx="1842" cy="799.6" r="7.5" fill="none" stroke="#43d36b" stroke-width="1.1"/><path d="M1841.8 795.5 V800.3 H1844.8 M1839.4 790.8 H1844.6" fill="none" stroke="#43d36b" stroke-width="1.2"/><path d="M1846.2 791.2 L1849.8 792.6 L1847.6 795 Z" fill="#43d36b"/><text x="1550" y="840" font-size="13" fill="#000">Console</text><rect x="1827.5" y="821.5" width="27" height="27" fill="#e1e1e1" stroke="#adadad"/><rect x="1831" y="826" width="20" height="18" rx="1" fill="#c0400f"/><rect x="1831" y="828.3" width="20" height="1" fill="#e1e1e1"/><path d="M1836.3 833 L1839.6 835.8 L1836.3 838.6 M1840.5 838.3 H1845.6" fill="none" stroke="#f4d2c2" stroke-width="1.1"/><text x="1550" y="876" font-size="13" font-weight="bold" fill="#000">Real Time Statistics</text><rect x="1827.5" y="857.5" width="27" height="27" fill="#e1e1e1" stroke="#adadad"/><rect x="1833.5" y="867" width="3.5" height="11.5" fill="#c0400f"/><rect x="1839" y="871" width="3.5" height="7.5" fill="#c0400f"/><rect x="1845" y="864.5" width="3.5" height="14" fill="#c0400f"/><rect x="1616.5" y="893.5" width="27" height="27" fill="#e1e1e1" stroke="#adadad"/><rect x="1677.5" y="893.5" width="27" height="27" fill="#e1e1e1" stroke="#adadad"/><rect x="1738.5" y="893.5" width="27" height="27" fill="#e1e1e1" stroke="#adadad"/><rect x="1799.5" y="893.5" width="27" height="27" fill="#e1e1e1" stroke="#adadad"/><path d="M1624 900 L1637 907 L1624 914 Z" fill="#c0400f"/><circle cx="1691" cy="907" r="9" fill="#c0400f"/><rect x="1687.6" y="902.5" width="2" height="9" fill="#e9e9e9"/><rect x="1692.4" y="902.5" width="2" height="9" fill="#e9e9e9"/><rect x="1743.5" y="898.5" width="17" height="17" rx="2" fill="#c0400f"/><rect x="1749" y="904" width="6" height="6" fill="#e9e9e9"/><path d="M1814 898.6 A8.3 8.3 0 0 0 1807.6 913 M1811.8 915.3 A8.3 8.3 0 0 0 1818.2 901" fill="none" stroke="#c0400f" stroke-width="1.9"/><path d="M1805 914.6 L1809.6 914.6 L1809.6 909.8 Z M1816.3 899 L1821 899 L1816.3 903.7 Z" fill="#c0400f" stroke="#c0400f" stroke-width="0.6"/><rect x="1623" y="928" width="200" height="20" fill="#008000"/><text x="1623" y="943" font-size="13" fill="#000">Connected</text><text x="13.3" y="969" font-size="13" fill="#000">Drop rate</text><text x="98" y="969" font-size="13" fill="#000">0</text><text x="245.3" y="969" font-size="13" fill="#000">0%</text><text x="281" y="969" font-size="13" fill="#000">Recieved packet counter:</text><text x="447" y="969" font-size="13" fill="#000">3500</text><text x="553" y="969" font-size="13" fill="#000">Sampling time [ms]:</text><text x="720" y="969" font-size="13" fill="#000">1.000000</text><text x="825.3" y="969" font-size="13" fill="#000">Sampling period [us]</text><text x="951.7" y="969" font-size="13" fill="#000">10</text><text x="1057" y="969" font-size="13" fill="#000">Acquisition Duration</text><text x="1183.4" y="969" font-size="13" fill="#000">00:00:39</text><rect x="155.5" y="954.5" width="80" height="19" fill="#e6e6e6" stroke="#bcbcbc"/><rect x="13" y="980" width="1800" height="41" fill="#ffffff"/><rect x="1796" y="981" width="16" height="40" fill="#f0f0f0"/><line x1="13" y1="980.5" x2="1813" y2="980.5" stroke="#6e6e6e" stroke-width="1"/><line x1="13.5" y1="980" x2="13.5" y2="1021" stroke="#6e6e6e" stroke-width="1"/><line x1="1812.5" y1="980" x2="1812.5" y2="1021" stroke="#6e6e6e" stroke-width="1"/><path d="M1800 992.5 L1803.5 989 L1807 992.5" fill="none" stroke="#555" stroke-width="1.6"/><clipPath id="lc"><rect x="14" y="981" width="1782" height="40"/></clipPath><g clip-path="url(#lc)"><text x="18.6" y="994" font-size="13" fill="#000">[Application] [18:03:20]:New Energy point received (Value: 0; Key: 262212; Name: 1:DataL sending 764)</text><text x="18.6" y="1010" font-size="13" fill="#000">[Application] [18:03:20]:New Energy point received (Value: 0; Key: 272828; Name: 1:DataL sent 764)</text><text x="18.6" y="1026" font-size="13" fill="#000">[Application] [18:03:20]:New Energy point received (Value: 0; Key: 272872; Name: 1:STOP 152)</text></g></svg>
</body></html>
